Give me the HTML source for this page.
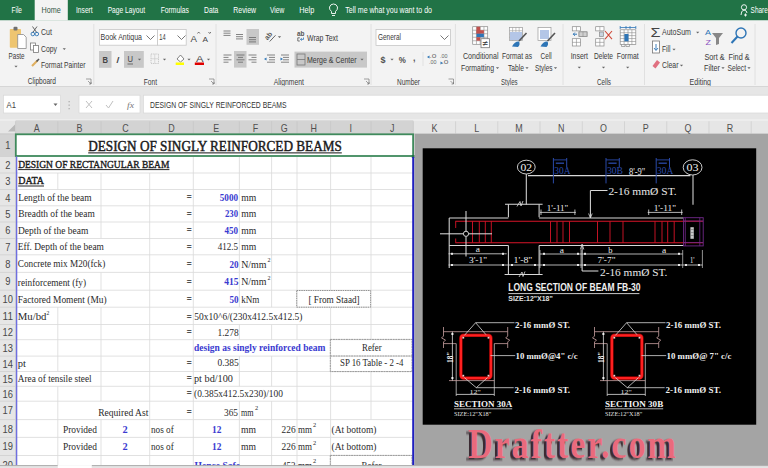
<!DOCTYPE html><html><head><meta charset="utf-8"><style>html,body{margin:0;padding:0;width:768px;height:468px;overflow:hidden;background:#fff}svg{display:block}</style></head><body>
<svg width="768" height="468" viewBox="0 0 768 468">
<rect x="0.00" y="0.00" width="768.00" height="20.50" fill="#217346" />
<rect x="0.00" y="20.50" width="768.00" height="66.00" fill="#f3f3f3" />
<rect x="34.70" y="0.00" width="33.10" height="20.50" fill="#f3f3f3" />
<text x="11.50" y="13.20" font-size="8.8" font-family="'Liberation Sans', sans-serif" font-weight="normal" fill="#ffffff" textLength="10.50" lengthAdjust="spacingAndGlyphs" >File</text>
<text x="76.00" y="13.20" font-size="8.8" font-family="'Liberation Sans', sans-serif" font-weight="normal" fill="#ffffff" textLength="16.70" lengthAdjust="spacingAndGlyphs" >Insert</text>
<text x="107.70" y="13.20" font-size="8.8" font-family="'Liberation Sans', sans-serif" font-weight="normal" fill="#ffffff" textLength="37.30" lengthAdjust="spacingAndGlyphs" >Page Layout</text>
<text x="160.70" y="13.20" font-size="8.8" font-family="'Liberation Sans', sans-serif" font-weight="normal" fill="#ffffff" textLength="28.30" lengthAdjust="spacingAndGlyphs" >Formulas</text>
<text x="204.00" y="13.20" font-size="8.8" font-family="'Liberation Sans', sans-serif" font-weight="normal" fill="#ffffff" textLength="14.30" lengthAdjust="spacingAndGlyphs" >Data</text>
<text x="233.30" y="13.20" font-size="8.8" font-family="'Liberation Sans', sans-serif" font-weight="normal" fill="#ffffff" textLength="22.70" lengthAdjust="spacingAndGlyphs" >Review</text>
<text x="270.00" y="13.20" font-size="8.8" font-family="'Liberation Sans', sans-serif" font-weight="normal" fill="#ffffff" textLength="14.30" lengthAdjust="spacingAndGlyphs" >View</text>
<text x="299.30" y="13.20" font-size="8.8" font-family="'Liberation Sans', sans-serif" font-weight="normal" fill="#ffffff" textLength="15.00" lengthAdjust="spacingAndGlyphs" >Help</text>
<text x="345.30" y="13.20" font-size="8.8" font-family="'Liberation Sans', sans-serif" font-weight="normal" fill="#ffffff" textLength="86.70" lengthAdjust="spacingAndGlyphs" >Tell me what you want to do</text>
<text x="41.50" y="13.20" font-size="8.8" font-family="'Liberation Sans', sans-serif" font-weight="normal" fill="#355846" textLength="19.20" lengthAdjust="spacingAndGlyphs" >Home</text>
<path d="M331.5 13.5 L331.5 11.5 Q329 9.5 329.5 7 Q330.5 4 333.5 4 Q336.5 4 337.5 7 Q338 9.5 335.5 11.5 L335.5 13.5 Z M332 15.5 L335 15.5" stroke="#ffffff" fill="none" stroke-width="0.9" />
<path d="M741 15 Q741 10.5 744 10 Q747 10.5 747 13" stroke="#ffffff" fill="none" stroke-width="0.9" />
<circle cx="744" cy="7.3" r="2.6" fill="none" stroke="#ffffff" stroke-width="0.9"/>
<path d="M745.5 13.5 L745.5 16.5 M744 15 L747 15" stroke="#ffffff" fill="none" stroke-width="0.9" />
<text x="750.60" y="13.20" font-size="8.8" font-family="'Liberation Sans', sans-serif" font-weight="normal" fill="#ffffff" textLength="17.20" lengthAdjust="spacingAndGlyphs" >Share</text>
<rect x="9.80" y="29.00" width="11.20" height="18.70" fill="#eec570"  rx="0.8"/>
<rect x="13.50" y="26.80" width="4.00" height="3.70" fill="#707070"  rx="1"/>
<path d="M17.7 34.5 L23.5 34.5 L26.2 37.2 L26.2 48.5 L17.7 48.5 Z" stroke="#8a8a8a" fill="#ffffff" stroke-width="0.8" />
<text x="8.50" y="59.20" font-size="9.0" font-family="'Liberation Sans', sans-serif" font-weight="normal" fill="#3a3a3a" textLength="16.10" lengthAdjust="spacingAndGlyphs" >Paste</text>
<path d="M14.4 65.7 L17.6 65.7 L16 67.5 Z" stroke="none" fill="#666" stroke-width="1" />
<path d="M32.5 26.5 L37 33 M37 26.5 L32.5 33" stroke="#555" fill="none" stroke-width="0.9" />
<circle cx="32.8" cy="34" r="1.8" fill="none" stroke="#2e75b6" stroke-width="0.9"/><circle cx="36.8" cy="34" r="1.8" fill="none" stroke="#2e75b6" stroke-width="0.9"/>
<text x="41.00" y="34.60" font-size="9.0" font-family="'Liberation Sans', sans-serif" font-weight="normal" fill="#3a3a3a" textLength="11.00" lengthAdjust="spacingAndGlyphs" >Cut</text>
<rect x="30.50" y="43.00" width="5.00" height="7.00" fill="#ffffff" stroke="#7a7a7a" stroke-width="0.8"/>
<rect x="33.50" y="45.50" width="5.00" height="7.00" fill="#ffffff" stroke="#7a7a7a" stroke-width="0.8"/>
<text x="41.00" y="51.50" font-size="9.0" font-family="'Liberation Sans', sans-serif" font-weight="normal" fill="#3a3a3a" textLength="16.00" lengthAdjust="spacingAndGlyphs" >Copy</text>
<path d="M62.699999999999996 48.2 L65.89999999999999 48.2 L64.3 50 Z" stroke="none" fill="#666" stroke-width="1" />
<path d="M32 66 L37.5 60.5" stroke="#e0b060" fill="none" stroke-width="2.2" />
<path d="M36.5 61.5 L39 59" stroke="#555" fill="none" stroke-width="1.6" />
<text x="41.00" y="67.50" font-size="9.0" font-family="'Liberation Sans', sans-serif" font-weight="normal" fill="#3a3a3a" textLength="44.40" lengthAdjust="spacingAndGlyphs" >Format Painter</text>
<text x="27.70" y="83.80" font-size="9.0" font-family="'Liberation Sans', sans-serif" font-weight="normal" fill="#3a3a3a" textLength="28.30" lengthAdjust="spacingAndGlyphs" >Clipboard</text>
<path d="M86.0 79.0 L91.0 79.0 L91.0 84.0 M88.0 81.0 L91.0 84.0 M91.0 82.0 L91.0 84.0 L89.0 84.0" stroke="#7a7a7a" fill="none" stroke-width="0.7" />
<line x1="93.80" y1="24.00" x2="93.80" y2="85.00" stroke="#dadada" stroke-width="0.8" />
<rect x="99.50" y="29.50" width="57.90" height="15.70" fill="#ffffff" stroke="#c6c6c6" stroke-width="0.8"/>
<rect x="157.40" y="29.50" width="28.80" height="15.70" fill="#ffffff" stroke="#c6c6c6" stroke-width="0.8"/>
<text x="100.60" y="40.40" font-size="9.0" font-family="'Liberation Sans', sans-serif" font-weight="normal" fill="#3a3a3a" textLength="41.40" lengthAdjust="spacingAndGlyphs" >Book Antiqua</text>
<path d="M146.5 35.5 L150.5 39.5 L154.5 35.5" stroke="#555" fill="none" stroke-width="0.8" />
<text x="159.30" y="40.40" font-size="9.0" font-family="'Liberation Sans', sans-serif" font-weight="normal" fill="#3a3a3a" textLength="6.30" lengthAdjust="spacingAndGlyphs" >14</text>
<path d="M177.5 35.5 L181.5 39.5 L185.5 35.5" stroke="#555" fill="none" stroke-width="0.8" />
<text x="190.50" y="41.50" font-size="9.5" font-family="'Liberation Sans', sans-serif" font-weight="normal" fill="#444" textLength="6.50" lengthAdjust="spacingAndGlyphs" >A</text>
<path d="M197.5 33.5 L198.7 32 L199.9 33.5" stroke="#444" fill="none" stroke-width="0.7" />
<text x="202.50" y="41.50" font-size="8" font-family="'Liberation Sans', sans-serif" font-weight="normal" fill="#444" textLength="5.50" lengthAdjust="spacingAndGlyphs" >A</text>
<path d="M208.5 32 L209.7 33.5 L210.9 32" stroke="#444" fill="none" stroke-width="0.7" />
<rect x="99.00" y="51.00" width="12.50" height="16.80" fill="#c8c8c8" />
<text x="102.50" y="62.50" font-size="8.5" font-family="'Liberation Sans', sans-serif" font-weight="bold" fill="#444" textLength="5.50" lengthAdjust="spacingAndGlyphs" >B</text>
<text x="116.00" y="62.50" font-size="8.5" font-family="'Liberation Sans', sans-serif" font-weight="normal" fill="#444" textLength="3.50" lengthAdjust="spacingAndGlyphs" font-style="italic">I</text>
<rect x="124.00" y="51.00" width="19.80" height="16.80" fill="#c8c8c8" />
<text x="127.50" y="62.00" font-size="8.5" font-family="'Liberation Sans', sans-serif" font-weight="normal" fill="#444" textLength="5.50" lengthAdjust="spacingAndGlyphs" >U</text>
<line x1="127.50" y1="64.00" x2="133.00" y2="64.00" stroke="#444" stroke-width="0.7" />
<path d="M137.9 58.7 L141.1 58.7 L139.5 60.5 Z" stroke="none" fill="#666" stroke-width="1" />
<rect x="151.00" y="54.00" width="7.50" height="9.50" fill="none" stroke="#b0b0b0" stroke-width="0.7" stroke-dasharray="1 0.8"/>
<line x1="154.75" y1="54.00" x2="154.75" y2="63.50" stroke="#c8c8c8" stroke-width="0.6" />
<line x1="151.00" y1="58.75" x2="158.50" y2="58.75" stroke="#c8c8c8" stroke-width="0.6" />
<path d="M162.9 58.7 L166.1 58.7 L164.5 60.5 Z" stroke="none" fill="#666" stroke-width="1" />
<path d="M177 59 L180.5 55 L184 59 L180.5 62 Z" stroke="#666" fill="#ffffff" stroke-width="0.8" />
<rect x="175.70" y="62.50" width="8.30" height="2.50" fill="#ffff00" />
<path d="M187.4 58.7 L190.6 58.7 L189 60.5 Z" stroke="none" fill="#666" stroke-width="1" />
<text x="196.00" y="61.50" font-size="9" font-family="'Liberation Sans', sans-serif" font-weight="normal" fill="#444" textLength="7.50" lengthAdjust="spacingAndGlyphs" >A</text>
<rect x="194.80" y="62.50" width="9.20" height="2.50" fill="#e00000" />
<path d="M206.9 58.7 L210.1 58.7 L208.5 60.5 Z" stroke="none" fill="#666" stroke-width="1" />
<text x="143.80" y="84.70" font-size="9.0" font-family="'Liberation Sans', sans-serif" font-weight="normal" fill="#3a3a3a" textLength="13.20" lengthAdjust="spacingAndGlyphs" >Font</text>
<path d="M209.0 79.0 L214.0 79.0 L214.0 84.0 M211.0 81.0 L214.0 84.0 M214.0 82.0 L214.0 84.0 L212.0 84.0" stroke="#7a7a7a" fill="none" stroke-width="0.7" />
<line x1="216.00" y1="24.00" x2="216.00" y2="85.00" stroke="#dadada" stroke-width="0.8" />
<line x1="223.50" y1="31.00" x2="230.50" y2="31.00" stroke="#666" stroke-width="0.8" />
<line x1="223.50" y1="33.20" x2="230.50" y2="33.20" stroke="#666" stroke-width="0.8" />
<line x1="223.50" y1="35.40" x2="230.50" y2="35.40" stroke="#666" stroke-width="0.8" />
<line x1="236.00" y1="34.50" x2="243.00" y2="34.50" stroke="#666" stroke-width="0.8" />
<line x1="236.00" y1="36.70" x2="243.00" y2="36.70" stroke="#666" stroke-width="0.8" />
<line x1="236.00" y1="38.90" x2="243.00" y2="38.90" stroke="#666" stroke-width="0.8" />
<rect x="246.50" y="29.00" width="12.50" height="15.80" fill="#c8c8c8" />
<line x1="249.00" y1="37.50" x2="256.00" y2="37.50" stroke="#666" stroke-width="0.8" />
<line x1="249.00" y1="39.70" x2="256.00" y2="39.70" stroke="#666" stroke-width="0.8" />
<line x1="249.00" y1="41.90" x2="256.00" y2="41.90" stroke="#666" stroke-width="0.8" />
<text x="0.00" y="0.00" font-size="7" font-family="'Liberation Sans', sans-serif" font-weight="bold" fill="#555" textLength="8.00" lengthAdjust="spacingAndGlyphs" transform="translate(267.5 40.5) rotate(-50)">ab</text>
<path d="M269.7 41.5 L275.5 35.3" stroke="#555" fill="none" stroke-width="0.9" />
<path d="M277.9 36.2 L281.1 36.2 L279.5 38 Z" stroke="none" fill="#666" stroke-width="1" />
<line x1="223.50" y1="55.00" x2="231.50" y2="55.00" stroke="#666" stroke-width="0.8" />
<line x1="223.50" y1="57.40" x2="228.50" y2="57.40" stroke="#666" stroke-width="0.8" />
<line x1="223.50" y1="59.80" x2="231.50" y2="59.80" stroke="#666" stroke-width="0.8" />
<line x1="223.50" y1="62.20" x2="228.50" y2="62.20" stroke="#666" stroke-width="0.8" />
<rect x="234.00" y="51.00" width="12.50" height="16.60" fill="#c8c8c8" />
<line x1="236.50" y1="55.00" x2="244.50" y2="55.00" stroke="#666" stroke-width="0.8" />
<line x1="238.00" y1="57.40" x2="243.00" y2="57.40" stroke="#666" stroke-width="0.8" />
<line x1="236.50" y1="59.80" x2="244.50" y2="59.80" stroke="#666" stroke-width="0.8" />
<line x1="238.00" y1="62.20" x2="243.00" y2="62.20" stroke="#666" stroke-width="0.8" />
<line x1="248.50" y1="55.00" x2="256.50" y2="55.00" stroke="#666" stroke-width="0.8" />
<line x1="251.50" y1="57.40" x2="256.50" y2="57.40" stroke="#666" stroke-width="0.8" />
<line x1="248.50" y1="59.80" x2="256.50" y2="59.80" stroke="#666" stroke-width="0.8" />
<line x1="251.50" y1="62.20" x2="256.50" y2="62.20" stroke="#666" stroke-width="0.8" />
<line x1="267.00" y1="55.00" x2="275.00" y2="55.00" stroke="#666" stroke-width="0.8" />
<line x1="269.00" y1="57.40" x2="275.00" y2="57.40" stroke="#666" stroke-width="0.8" />
<line x1="269.00" y1="59.80" x2="275.00" y2="59.80" stroke="#666" stroke-width="0.8" />
<line x1="267.00" y1="62.20" x2="275.00" y2="62.20" stroke="#666" stroke-width="0.8" />
<path d="M264 59 L266.5 57.5 L266.5 60.5 Z" stroke="none" fill="#2e75b6" stroke-width="1" />
<line x1="281.00" y1="55.00" x2="289.00" y2="55.00" stroke="#666" stroke-width="0.8" />
<line x1="283.00" y1="57.40" x2="289.00" y2="57.40" stroke="#666" stroke-width="0.8" />
<line x1="283.00" y1="59.80" x2="289.00" y2="59.80" stroke="#666" stroke-width="0.8" />
<line x1="281.00" y1="62.20" x2="289.00" y2="62.20" stroke="#666" stroke-width="0.8" />
<path d="M283 59 L280.5 57.5 L280.5 60.5 Z" stroke="none" fill="#2e75b6" stroke-width="1" />
<text x="297.00" y="36.30" font-size="6.5" font-family="'Liberation Sans', sans-serif" font-weight="bold" fill="#555" textLength="7.50" lengthAdjust="spacingAndGlyphs" >ab</text>
<path d="M299.8 37.8 L297.8 37.8 L297.8 41 L299.8 41" stroke="#666" fill="none" stroke-width="0.9" />
<path d="M300.5 39.4 L303.5 39.4 L303.5 37.5 M301.8 38.2 L300.5 39.4 L301.8 40.6" stroke="#2e75b6" fill="none" stroke-width="0.8" />
<text x="307.00" y="40.50" font-size="9.0" font-family="'Liberation Sans', sans-serif" font-weight="normal" fill="#3a3a3a" textLength="31.00" lengthAdjust="spacingAndGlyphs" >Wrap Text</text>
<rect x="294.50" y="51.60" width="72.50" height="16.00" fill="#c8c8c8" />
<rect x="297.00" y="54.00" width="8.00" height="11.00" fill="none" stroke="#777" stroke-width="0.8"/>
<line x1="297.00" y1="59.50" x2="305.00" y2="59.50" stroke="#777" stroke-width="0.8" />
<text x="307.00" y="62.60" font-size="9.0" font-family="'Liberation Sans', sans-serif" font-weight="normal" fill="#3a3a3a" textLength="49.50" lengthAdjust="spacingAndGlyphs" >Merge &amp; Center</text>
<path d="M360.4 58.7 L363.6 58.7 L362 60.5 Z" stroke="none" fill="#666" stroke-width="1" />
<text x="273.70" y="84.50" font-size="9.0" font-family="'Liberation Sans', sans-serif" font-weight="normal" fill="#3a3a3a" textLength="30.30" lengthAdjust="spacingAndGlyphs" >Alignment</text>
<path d="M364.0 79.0 L369.0 79.0 L369.0 84.0 M366.0 81.0 L369.0 84.0 M369.0 82.0 L369.0 84.0 L367.0 84.0" stroke="#7a7a7a" fill="none" stroke-width="0.7" />
<line x1="371.00" y1="24.00" x2="371.00" y2="85.00" stroke="#dadada" stroke-width="0.8" />
<rect x="376.00" y="29.40" width="74.50" height="16.00" fill="#ffffff" stroke="#c6c6c6" stroke-width="0.8"/>
<text x="378.00" y="40.40" font-size="9.0" font-family="'Liberation Sans', sans-serif" font-weight="normal" fill="#3a3a3a" textLength="23.00" lengthAdjust="spacingAndGlyphs" >General</text>
<path d="M440.5 35.5 L444.5 39.5 L448.5 35.5" stroke="#555" fill="none" stroke-width="0.8" />
<text x="380.50" y="62.50" font-size="9.5" font-family="'Liberation Sans', sans-serif" font-weight="bold" fill="#505050" textLength="5.00" lengthAdjust="spacingAndGlyphs" >$</text>
<path d="M390.4 58.7 L393.6 58.7 L392 60.5 Z" stroke="none" fill="#666" stroke-width="1" />
<text x="398.70" y="62.50" font-size="8.5" font-family="'Liberation Sans', sans-serif" font-weight="bold" fill="#505050" textLength="7.10" lengthAdjust="spacingAndGlyphs" >%</text>
<text x="413.00" y="61.00" font-size="9" font-family="'Liberation Sans', sans-serif" font-weight="bold" fill="#555" textLength="2.50" lengthAdjust="spacingAndGlyphs" >,</text>
<line x1="423.00" y1="52.00" x2="423.00" y2="66.00" stroke="#dadada" stroke-width="0.7" />
<text x="429.50" y="58.00" font-size="5.5" font-family="'Liberation Sans', sans-serif" font-weight="normal" fill="#666" textLength="7.00" lengthAdjust="spacingAndGlyphs" >.0</text>
<text x="429.00" y="64.00" font-size="5.5" font-family="'Liberation Sans', sans-serif" font-weight="normal" fill="#666" textLength="7.50" lengthAdjust="spacingAndGlyphs" >.00</text>
<path d="M427 57 L429.5 55.5 L429.5 58.5 Z" stroke="none" fill="#2e75b6" stroke-width="1" />
<text x="440.00" y="58.00" font-size="5.5" font-family="'Liberation Sans', sans-serif" font-weight="normal" fill="#666" textLength="7.50" lengthAdjust="spacingAndGlyphs" >.00</text>
<text x="441.50" y="64.00" font-size="5.5" font-family="'Liberation Sans', sans-serif" font-weight="normal" fill="#666" textLength="7.00" lengthAdjust="spacingAndGlyphs" >.0</text>
<path d="M443 63 L440.5 61.5 L440.5 64.5 Z" stroke="none" fill="#2e75b6" stroke-width="1" />
<text x="397.00" y="84.50" font-size="9.0" font-family="'Liberation Sans', sans-serif" font-weight="normal" fill="#3a3a3a" textLength="23.00" lengthAdjust="spacingAndGlyphs" >Number</text>
<path d="M448.5 79.0 L453.5 79.0 L453.5 84.0 M450.5 81.0 L453.5 84.0 M453.5 82.0 L453.5 84.0 L451.5 84.0" stroke="#7a7a7a" fill="none" stroke-width="0.7" />
<line x1="455.40" y1="24.00" x2="455.40" y2="85.00" stroke="#dadada" stroke-width="0.8" />
<rect x="472.70" y="26.70" width="15.00" height="17.60" fill="#ffffff" stroke="#8a8a8a" stroke-width="0.7"/>
<line x1="476.45" y1="26.70" x2="476.45" y2="44.30" stroke="#8a8a8a" stroke-width="0.6" />
<line x1="480.20" y1="26.70" x2="480.20" y2="44.30" stroke="#8a8a8a" stroke-width="0.6" />
<line x1="483.95" y1="26.70" x2="483.95" y2="44.30" stroke="#8a8a8a" stroke-width="0.6" />
<line x1="472.70" y1="30.22" x2="487.70" y2="30.22" stroke="#8a8a8a" stroke-width="0.6" />
<line x1="472.70" y1="33.74" x2="487.70" y2="33.74" stroke="#8a8a8a" stroke-width="0.6" />
<line x1="472.70" y1="37.26" x2="487.70" y2="37.26" stroke="#8a8a8a" stroke-width="0.6" />
<line x1="472.70" y1="40.78" x2="487.70" y2="40.78" stroke="#8a8a8a" stroke-width="0.6" />
<rect x="476.50" y="26.70" width="3.70" height="7.00" fill="#c0504d" />
<rect x="476.50" y="30.20" width="7.40" height="3.50" fill="#c0504d" />
<rect x="476.50" y="33.70" width="7.40" height="3.50" fill="#2e75b6" />
<rect x="476.50" y="37.20" width="3.70" height="3.50" fill="#c0504d" />
<rect x="481.00" y="38.70" width="8.40" height="9.00" fill="#ffffff" stroke="#777" stroke-width="0.8"/>
<text x="482.50" y="46.00" font-size="8" font-family="'Liberation Sans', sans-serif" font-weight="normal" fill="#333" textLength="5.50" lengthAdjust="spacingAndGlyphs" >≠</text>
<text x="463.00" y="59.20" font-size="9.0" font-family="'Liberation Sans', sans-serif" font-weight="normal" fill="#3a3a3a" textLength="35.50" lengthAdjust="spacingAndGlyphs" >Conditional</text>
<text x="461.00" y="70.60" font-size="9.0" font-family="'Liberation Sans', sans-serif" font-weight="normal" fill="#3a3a3a" textLength="33.00" lengthAdjust="spacingAndGlyphs" >Formatting</text>
<path d="M495.9 67.2 L499.1 67.2 L497.5 69 Z" stroke="none" fill="#666" stroke-width="1" />
<rect x="509.40" y="27.50" width="13.00" height="13.00" fill="#ffffff" stroke="#9a9a9a" stroke-width="0.7"/>
<line x1="512.65" y1="27.50" x2="512.65" y2="40.50" stroke="#9a9a9a" stroke-width="0.6" />
<line x1="515.90" y1="27.50" x2="515.90" y2="40.50" stroke="#9a9a9a" stroke-width="0.6" />
<line x1="519.15" y1="27.50" x2="519.15" y2="40.50" stroke="#9a9a9a" stroke-width="0.6" />
<line x1="509.40" y1="30.75" x2="522.40" y2="30.75" stroke="#9a9a9a" stroke-width="0.6" />
<line x1="509.40" y1="34.00" x2="522.40" y2="34.00" stroke="#9a9a9a" stroke-width="0.6" />
<line x1="509.40" y1="37.25" x2="522.40" y2="37.25" stroke="#9a9a9a" stroke-width="0.6" />
<rect x="510.00" y="32.00" width="12.00" height="8.00" fill="#b4c6e7" />
<path d="M512 46.5 Q515 41 519 41.5 Q520.5 44.5 518 47 Z" stroke="none" fill="#2e75b6" stroke-width="1" />
<path d="M519 41 L526.5 33" stroke="#555" fill="none" stroke-width="1.6" />
<text x="502.00" y="59.20" font-size="9.0" font-family="'Liberation Sans', sans-serif" font-weight="normal" fill="#3a3a3a" textLength="30.00" lengthAdjust="spacingAndGlyphs" >Format as</text>
<text x="508.00" y="70.60" font-size="9.0" font-family="'Liberation Sans', sans-serif" font-weight="normal" fill="#3a3a3a" textLength="16.00" lengthAdjust="spacingAndGlyphs" >Table</text>
<path d="M525.4 67.2 L528.6 67.2 L527 69 Z" stroke="none" fill="#666" stroke-width="1" />
<rect x="538.00" y="27.50" width="13.00" height="13.00" fill="#ffffff" stroke="#9a9a9a" stroke-width="0.7"/>
<rect x="540.00" y="30.00" width="9.00" height="9.00" fill="#b4c6e7" />
<path d="M540.5 46.5 Q543.5 41 547.5 41.5 Q549 44.5 546.5 47 Z" stroke="none" fill="#2e75b6" stroke-width="1" />
<path d="M547.5 41 L555 33" stroke="#555" fill="none" stroke-width="1.6" />
<text x="540.60" y="59.20" font-size="9.0" font-family="'Liberation Sans', sans-serif" font-weight="normal" fill="#3a3a3a" textLength="11.20" lengthAdjust="spacingAndGlyphs" >Cell</text>
<text x="535.00" y="70.60" font-size="9.0" font-family="'Liberation Sans', sans-serif" font-weight="normal" fill="#3a3a3a" textLength="17.50" lengthAdjust="spacingAndGlyphs" >Styles</text>
<path d="M553.9 67.2 L557.1 67.2 L555.5 69 Z" stroke="none" fill="#666" stroke-width="1" />
<text x="501.00" y="84.70" font-size="9.0" font-family="'Liberation Sans', sans-serif" font-weight="normal" fill="#3a3a3a" textLength="16.60" lengthAdjust="spacingAndGlyphs" >Styles</text>
<line x1="563.00" y1="24.00" x2="563.00" y2="85.00" stroke="#dadada" stroke-width="0.8" />
<rect x="572.30" y="26.70" width="8.30" height="4.20" fill="#ffffff" stroke="#8a8a8a" stroke-width="0.7"/>
<line x1="576.45" y1="26.70" x2="576.45" y2="30.90" stroke="#8a8a8a" stroke-width="0.6" />
<rect x="579.00" y="31.90" width="8.00" height="4.70" fill="#ffffff" stroke="#8a8a8a" stroke-width="0.7"/>
<line x1="583.00" y1="31.90" x2="583.00" y2="36.60" stroke="#8a8a8a" stroke-width="0.6" />
<rect x="579.00" y="31.90" width="8.00" height="4.70" fill="#d0d0d0" stroke="#8a8a8a" stroke-width="0.7"/>
<line x1="583.00" y1="31.90" x2="583.00" y2="36.60" stroke="#8a8a8a" stroke-width="0.6" />
<path d="M573.3 34.2 L577 34.2 M574.8 32.6 L573.3 34.2 L574.8 35.8" stroke="#2e75b6" fill="none" stroke-width="1.0" />
<rect x="572.30" y="38.70" width="8.30" height="7.30" fill="#ffffff" stroke="#8a8a8a" stroke-width="0.7"/>
<line x1="576.45" y1="38.70" x2="576.45" y2="46.00" stroke="#8a8a8a" stroke-width="0.6" />
<line x1="572.30" y1="42.35" x2="580.60" y2="42.35" stroke="#8a8a8a" stroke-width="0.6" />
<rect x="595.70" y="26.70" width="8.30" height="4.20" fill="#ffffff" stroke="#8a8a8a" stroke-width="0.7"/>
<line x1="599.85" y1="26.70" x2="599.85" y2="30.90" stroke="#8a8a8a" stroke-width="0.6" />
<rect x="599.40" y="32.00" width="4.10" height="4.50" fill="#c8d4e0" stroke="#8a8a8a" stroke-width="0.7"/>
<path d="M605 31 L612 39.2 M612 31 L605 39.2" stroke="#d04a3a" fill="none" stroke-width="1.1" />
<rect x="595.70" y="38.70" width="8.30" height="7.30" fill="#ffffff" stroke="#8a8a8a" stroke-width="0.7"/>
<line x1="599.85" y1="38.70" x2="599.85" y2="46.00" stroke="#8a8a8a" stroke-width="0.6" />
<line x1="595.70" y1="42.35" x2="604.00" y2="42.35" stroke="#8a8a8a" stroke-width="0.6" />
<path d="M620.2 27.5 L635.8 27.5 M620.2 26 L620.2 29 M635.8 26 L635.8 29 M626 26 L626 29 M630 26 L630 29" stroke="#2e75b6" fill="none" stroke-width="0.8" />
<rect x="620.20" y="29.80" width="15.60" height="14.60" fill="#ffffff" stroke="#8a8a8a" stroke-width="0.7"/>
<line x1="624.10" y1="29.80" x2="624.10" y2="44.40" stroke="#8a8a8a" stroke-width="0.6" />
<line x1="628.00" y1="29.80" x2="628.00" y2="44.40" stroke="#8a8a8a" stroke-width="0.6" />
<line x1="631.90" y1="29.80" x2="631.90" y2="44.40" stroke="#8a8a8a" stroke-width="0.6" />
<line x1="620.20" y1="32.72" x2="635.80" y2="32.72" stroke="#8a8a8a" stroke-width="0.6" />
<line x1="620.20" y1="35.64" x2="635.80" y2="35.64" stroke="#8a8a8a" stroke-width="0.6" />
<line x1="620.20" y1="38.56" x2="635.80" y2="38.56" stroke="#8a8a8a" stroke-width="0.6" />
<line x1="620.20" y1="41.48" x2="635.80" y2="41.48" stroke="#8a8a8a" stroke-width="0.6" />
<rect x="624.40" y="34.00" width="4.10" height="7.30" fill="#2e75b6" />
<path d="M621.5 44.4 L621.5 46.5 L625 46.5 L625 44.4 M626 44.4 L626 46.5 L629.5 46.5 L629.5 44.4" stroke="#8a8a8a" fill="none" stroke-width="0.7" />
<text x="570.70" y="59.20" font-size="9.0" font-family="'Liberation Sans', sans-serif" font-weight="normal" fill="#3a3a3a" textLength="17.30" lengthAdjust="spacingAndGlyphs" >Insert</text>
<path d="M577.6999999999999 66.7 L580.9 66.7 L579.3 68.5 Z" stroke="none" fill="#666" stroke-width="1" />
<text x="594.00" y="59.20" font-size="9.0" font-family="'Liberation Sans', sans-serif" font-weight="normal" fill="#3a3a3a" textLength="19.00" lengthAdjust="spacingAndGlyphs" >Delete</text>
<path d="M601.9 66.7 L605.1 66.7 L603.5 68.5 Z" stroke="none" fill="#666" stroke-width="1" />
<text x="616.80" y="59.20" font-size="9.0" font-family="'Liberation Sans', sans-serif" font-weight="normal" fill="#3a3a3a" textLength="21.90" lengthAdjust="spacingAndGlyphs" >Format</text>
<path d="M626.1 66.7 L629.3000000000001 66.7 L627.7 68.5 Z" stroke="none" fill="#666" stroke-width="1" />
<text x="597.00" y="84.70" font-size="9.0" font-family="'Liberation Sans', sans-serif" font-weight="normal" fill="#3a3a3a" textLength="14.00" lengthAdjust="spacingAndGlyphs" >Cells</text>
<line x1="644.50" y1="24.00" x2="644.50" y2="85.00" stroke="#dadada" stroke-width="0.8" />
<text x="650.50" y="36.50" font-size="12" font-family="'Liberation Sans', sans-serif" font-weight="normal" fill="#444" textLength="10.00" lengthAdjust="spacingAndGlyphs" >Σ</text>
<text x="662.00" y="35.20" font-size="9.0" font-family="'Liberation Sans', sans-serif" font-weight="normal" fill="#3a3a3a" textLength="29.00" lengthAdjust="spacingAndGlyphs" >AutoSum</text>
<path d="M696.1 31.7 L699.3000000000001 31.7 L697.7 33.5 Z" stroke="none" fill="#666" stroke-width="1" />
<rect x="652.50" y="41.00" width="7.00" height="12.00" fill="#ffffff" stroke="#777" stroke-width="0.8"/>
<path d="M656 44 L656 50 M654 48 L656 50.5 L658 48" stroke="#2e75b6" fill="none" stroke-width="0.9" />
<text x="662.00" y="51.70" font-size="9.0" font-family="'Liberation Sans', sans-serif" font-weight="normal" fill="#3a3a3a" textLength="8.50" lengthAdjust="spacingAndGlyphs" >Fill</text>
<path d="M672.4 48.7 L675.6 48.7 L674 50.5 Z" stroke="none" fill="#666" stroke-width="1" />
<path d="M652.5 66 L657 60 L660 62.5 L655.5 68.5 Z" stroke="none" fill="#e07080" stroke-width="1" />
<text x="662.00" y="68.00" font-size="9.0" font-family="'Liberation Sans', sans-serif" font-weight="normal" fill="#3a3a3a" textLength="16.50" lengthAdjust="spacingAndGlyphs" >Clear</text>
<path d="M679.9 64.7 L683.1 64.7 L681.5 66.5 Z" stroke="none" fill="#666" stroke-width="1" />
<text x="705.00" y="35.00" font-size="7.5" font-family="'Liberation Sans', sans-serif" font-weight="normal" fill="#2e75b6" textLength="6.00" lengthAdjust="spacingAndGlyphs" >A</text>
<text x="705.50" y="45.00" font-size="7.5" font-family="'Liberation Sans', sans-serif" font-weight="normal" fill="#8a50c0" textLength="5.50" lengthAdjust="spacingAndGlyphs" >Z</text>
<path d="M712 33 L723 33 L719 38 L719 44 L716 45 L716 38 Z" stroke="none" fill="#888" stroke-width="1" />
<text x="704.40" y="59.50" font-size="9.0" font-family="'Liberation Sans', sans-serif" font-weight="normal" fill="#3a3a3a" textLength="20.20" lengthAdjust="spacingAndGlyphs" >Sort &amp;</text>
<text x="704.00" y="70.60" font-size="9.0" font-family="'Liberation Sans', sans-serif" font-weight="normal" fill="#3a3a3a" textLength="16.00" lengthAdjust="spacingAndGlyphs" >Filter</text>
<path d="M721.4 67.2 L724.6 67.2 L723 69 Z" stroke="none" fill="#666" stroke-width="1" />
<circle cx="741" cy="33" r="5" fill="none" stroke="#2e75b6" stroke-width="1.4"/>
<path d="M737.5 36.5 L731.5 43" stroke="#2e75b6" fill="none" stroke-width="2" />
<text x="728.50" y="59.50" font-size="9.0" font-family="'Liberation Sans', sans-serif" font-weight="normal" fill="#3a3a3a" textLength="21.10" lengthAdjust="spacingAndGlyphs" >Find &amp;</text>
<text x="727.50" y="70.60" font-size="9.0" font-family="'Liberation Sans', sans-serif" font-weight="normal" fill="#3a3a3a" textLength="18.50" lengthAdjust="spacingAndGlyphs" >Select</text>
<path d="M747.4 67.2 L750.6 67.2 L749 69 Z" stroke="none" fill="#666" stroke-width="1" />
<text x="689.60" y="84.70" font-size="9.0" font-family="'Liberation Sans', sans-serif" font-weight="normal" fill="#3a3a3a" textLength="21.40" lengthAdjust="spacingAndGlyphs" >Editing</text>
<line x1="755.00" y1="24.00" x2="755.00" y2="85.00" stroke="#dadada" stroke-width="0.8" />
<line x1="0.00" y1="86.50" x2="768.00" y2="86.50" stroke="#d6d6d6" stroke-width="1" />
<rect x="0.00" y="87.00" width="768.00" height="32.70" fill="#e6e6e6" />
<rect x="3.50" y="95.20" width="57.00" height="17.80" fill="#ffffff" stroke="#d8d8d8" stroke-width="0.7"/>
<text x="6.60" y="107.80" font-size="8.5" font-family="'Liberation Sans', sans-serif" font-weight="normal" fill="#444" textLength="9.40" lengthAdjust="spacingAndGlyphs" >A1</text>
<path d="M53.5 103.5 L57.5 103.5 L55.5 106 Z" stroke="none" fill="#666" stroke-width="1" />
<rect x="68.50" y="101.00" width="1.30" height="1.30" fill="#b0b0b0" />
<rect x="68.50" y="104.50" width="1.30" height="1.30" fill="#b0b0b0" />
<rect x="68.50" y="108.00" width="1.30" height="1.30" fill="#b0b0b0" />
<rect x="79.00" y="95.20" width="61.00" height="17.80" fill="#ffffff" stroke="#d8d8d8" stroke-width="0.7"/>
<path d="M86 101 L92 108 M92 101 L86 108" stroke="#c0c0c0" fill="none" stroke-width="1" />
<path d="M106 105 L108.5 108 L113 101" stroke="#c0c0c0" fill="none" stroke-width="1" />
<text x="127.00" y="108.00" font-size="8.5" font-family="'Liberation Serif', serif" font-weight="normal" fill="#777" textLength="7.00" lengthAdjust="spacingAndGlyphs" font-style="italic">fx</text>
<rect x="143.40" y="95.20" width="625.60" height="17.80" fill="#ffffff" stroke="#d8d8d8" stroke-width="0.7"/>
<text x="150.00" y="107.80" font-size="8.5" font-family="'Liberation Sans', sans-serif" font-weight="normal" fill="#333" textLength="136.50" lengthAdjust="spacingAndGlyphs" >DESIGN OF SINGLY REINFORCED BEAMS</text>
<rect x="15.60" y="133.80" width="398.40" height="334.20" fill="#ffffff" />
<rect x="0.00" y="120.30" width="768.00" height="13.50" fill="#e6e6e6" />
<rect x="15.60" y="120.30" width="397.70" height="13.50" fill="#d3d3d3" />
<path d="M8 131.5 L15 131.5 L15 124.5 Z" stroke="none" fill="#b9b9b9" stroke-width="1" />
<rect x="0.00" y="133.80" width="15.60" height="334.20" fill="#e6e6e6" />
<rect x="0.00" y="133.80" width="15.60" height="22.70" fill="#d3d3d3" />
<line x1="15.60" y1="121.30" x2="15.60" y2="133.80" stroke="#c6c6c6" stroke-width="0.8" />
<line x1="57.80" y1="121.30" x2="57.80" y2="133.80" stroke="#c6c6c6" stroke-width="0.8" />
<line x1="101.00" y1="121.30" x2="101.00" y2="133.80" stroke="#c6c6c6" stroke-width="0.8" />
<line x1="149.70" y1="121.30" x2="149.70" y2="133.80" stroke="#c6c6c6" stroke-width="0.8" />
<line x1="193.30" y1="121.30" x2="193.30" y2="133.80" stroke="#c6c6c6" stroke-width="0.8" />
<line x1="239.40" y1="121.30" x2="239.40" y2="133.80" stroke="#c6c6c6" stroke-width="0.8" />
<line x1="271.60" y1="121.30" x2="271.60" y2="133.80" stroke="#c6c6c6" stroke-width="0.8" />
<line x1="297.00" y1="121.30" x2="297.00" y2="133.80" stroke="#c6c6c6" stroke-width="0.8" />
<line x1="330.60" y1="121.30" x2="330.60" y2="133.80" stroke="#c6c6c6" stroke-width="0.8" />
<line x1="371.00" y1="121.30" x2="371.00" y2="133.80" stroke="#c6c6c6" stroke-width="0.8" />
<line x1="413.30" y1="121.30" x2="413.30" y2="133.80" stroke="#c6c6c6" stroke-width="0.8" />
<line x1="0.00" y1="133.80" x2="768.00" y2="133.80" stroke="#c6c6c6" stroke-width="0.8" />
<line x1="455.54" y1="121.30" x2="455.54" y2="133.80" stroke="#cfcfcf" stroke-width="0.8" />
<line x1="497.78" y1="121.30" x2="497.78" y2="133.80" stroke="#cfcfcf" stroke-width="0.8" />
<line x1="540.02" y1="121.30" x2="540.02" y2="133.80" stroke="#cfcfcf" stroke-width="0.8" />
<line x1="582.26" y1="121.30" x2="582.26" y2="133.80" stroke="#cfcfcf" stroke-width="0.8" />
<line x1="624.50" y1="121.30" x2="624.50" y2="133.80" stroke="#cfcfcf" stroke-width="0.8" />
<line x1="666.74" y1="121.30" x2="666.74" y2="133.80" stroke="#cfcfcf" stroke-width="0.8" />
<line x1="708.98" y1="121.30" x2="708.98" y2="133.80" stroke="#cfcfcf" stroke-width="0.8" />
<line x1="751.22" y1="121.30" x2="751.22" y2="133.80" stroke="#cfcfcf" stroke-width="0.8" />
<text x="36.70" y="131.80" font-size="10.5" font-family="'Liberation Sans', sans-serif" font-weight="normal" fill="#505050"  text-anchor="middle" transform="translate(36.70 0) scale(0.85 1) translate(-36.70 0)">A</text>
<text x="79.40" y="131.80" font-size="10.5" font-family="'Liberation Sans', sans-serif" font-weight="normal" fill="#505050"  text-anchor="middle" transform="translate(79.40 0) scale(0.85 1) translate(-79.40 0)">B</text>
<text x="125.35" y="131.80" font-size="10.5" font-family="'Liberation Sans', sans-serif" font-weight="normal" fill="#505050"  text-anchor="middle" transform="translate(125.35 0) scale(0.85 1) translate(-125.35 0)">C</text>
<text x="171.50" y="131.80" font-size="10.5" font-family="'Liberation Sans', sans-serif" font-weight="normal" fill="#505050"  text-anchor="middle" transform="translate(171.50 0) scale(0.85 1) translate(-171.50 0)">D</text>
<text x="216.35" y="131.80" font-size="10.5" font-family="'Liberation Sans', sans-serif" font-weight="normal" fill="#505050"  text-anchor="middle" transform="translate(216.35 0) scale(0.85 1) translate(-216.35 0)">E</text>
<text x="255.50" y="131.80" font-size="10.5" font-family="'Liberation Sans', sans-serif" font-weight="normal" fill="#505050"  text-anchor="middle" transform="translate(255.50 0) scale(0.85 1) translate(-255.50 0)">F</text>
<text x="284.30" y="131.80" font-size="10.5" font-family="'Liberation Sans', sans-serif" font-weight="normal" fill="#505050"  text-anchor="middle" transform="translate(284.30 0) scale(0.85 1) translate(-284.30 0)">G</text>
<text x="313.80" y="131.80" font-size="10.5" font-family="'Liberation Sans', sans-serif" font-weight="normal" fill="#505050"  text-anchor="middle" transform="translate(313.80 0) scale(0.85 1) translate(-313.80 0)">H</text>
<text x="350.80" y="131.80" font-size="10.5" font-family="'Liberation Sans', sans-serif" font-weight="normal" fill="#505050"  text-anchor="middle" transform="translate(350.80 0) scale(0.85 1) translate(-350.80 0)">I</text>
<text x="392.15" y="131.80" font-size="10.5" font-family="'Liberation Sans', sans-serif" font-weight="normal" fill="#505050"  text-anchor="middle" transform="translate(392.15 0) scale(0.85 1) translate(-392.15 0)">J</text>
<text x="434.42" y="131.80" font-size="10.5" font-family="'Liberation Sans', sans-serif" font-weight="normal" fill="#505050"  text-anchor="middle" transform="translate(434.42 0) scale(0.85 1) translate(-434.42 0)">K</text>
<text x="476.66" y="131.80" font-size="10.5" font-family="'Liberation Sans', sans-serif" font-weight="normal" fill="#505050"  text-anchor="middle" transform="translate(476.66 0) scale(0.85 1) translate(-476.66 0)">L</text>
<text x="518.90" y="131.80" font-size="10.5" font-family="'Liberation Sans', sans-serif" font-weight="normal" fill="#505050"  text-anchor="middle" transform="translate(518.90 0) scale(0.85 1) translate(-518.90 0)">M</text>
<text x="561.14" y="131.80" font-size="10.5" font-family="'Liberation Sans', sans-serif" font-weight="normal" fill="#505050"  text-anchor="middle" transform="translate(561.14 0) scale(0.85 1) translate(-561.14 0)">N</text>
<text x="603.38" y="131.80" font-size="10.5" font-family="'Liberation Sans', sans-serif" font-weight="normal" fill="#505050"  text-anchor="middle" transform="translate(603.38 0) scale(0.85 1) translate(-603.38 0)">O</text>
<text x="645.62" y="131.80" font-size="10.5" font-family="'Liberation Sans', sans-serif" font-weight="normal" fill="#505050"  text-anchor="middle" transform="translate(645.62 0) scale(0.85 1) translate(-645.62 0)">P</text>
<text x="687.86" y="131.80" font-size="10.5" font-family="'Liberation Sans', sans-serif" font-weight="normal" fill="#505050"  text-anchor="middle" transform="translate(687.86 0) scale(0.85 1) translate(-687.86 0)">Q</text>
<text x="730.10" y="131.80" font-size="10.5" font-family="'Liberation Sans', sans-serif" font-weight="normal" fill="#505050"  text-anchor="middle" transform="translate(730.10 0) scale(0.85 1) translate(-730.10 0)">R</text>
<line x1="0.00" y1="156.50" x2="15.60" y2="156.50" stroke="#cfcfcf" stroke-width="0.8" />
<line x1="0.00" y1="173.00" x2="15.60" y2="173.00" stroke="#cfcfcf" stroke-width="0.8" />
<line x1="0.00" y1="189.50" x2="15.60" y2="189.50" stroke="#cfcfcf" stroke-width="0.8" />
<line x1="0.00" y1="205.80" x2="15.60" y2="205.80" stroke="#cfcfcf" stroke-width="0.8" />
<line x1="0.00" y1="222.00" x2="15.60" y2="222.00" stroke="#cfcfcf" stroke-width="0.8" />
<line x1="0.00" y1="238.50" x2="15.60" y2="238.50" stroke="#cfcfcf" stroke-width="0.8" />
<line x1="0.00" y1="254.80" x2="15.60" y2="254.80" stroke="#cfcfcf" stroke-width="0.8" />
<line x1="0.00" y1="272.40" x2="15.60" y2="272.40" stroke="#cfcfcf" stroke-width="0.8" />
<line x1="0.00" y1="290.20" x2="15.60" y2="290.20" stroke="#cfcfcf" stroke-width="0.8" />
<line x1="0.00" y1="307.20" x2="15.60" y2="307.20" stroke="#cfcfcf" stroke-width="0.8" />
<line x1="0.00" y1="324.50" x2="15.60" y2="324.50" stroke="#cfcfcf" stroke-width="0.8" />
<line x1="0.00" y1="339.70" x2="15.60" y2="339.70" stroke="#cfcfcf" stroke-width="0.8" />
<line x1="0.00" y1="356.10" x2="15.60" y2="356.10" stroke="#cfcfcf" stroke-width="0.8" />
<line x1="0.00" y1="371.50" x2="15.60" y2="371.50" stroke="#cfcfcf" stroke-width="0.8" />
<line x1="0.00" y1="386.30" x2="15.60" y2="386.30" stroke="#cfcfcf" stroke-width="0.8" />
<line x1="0.00" y1="401.20" x2="15.60" y2="401.20" stroke="#cfcfcf" stroke-width="0.8" />
<line x1="0.00" y1="419.60" x2="15.60" y2="419.60" stroke="#cfcfcf" stroke-width="0.8" />
<line x1="0.00" y1="437.40" x2="15.60" y2="437.40" stroke="#cfcfcf" stroke-width="0.8" />
<line x1="0.00" y1="455.50" x2="15.60" y2="455.50" stroke="#cfcfcf" stroke-width="0.8" />
<line x1="0.00" y1="474.00" x2="15.60" y2="474.00" stroke="#cfcfcf" stroke-width="0.8" />
<line x1="15.60" y1="133.80" x2="15.60" y2="468.00" stroke="#c6c6c6" stroke-width="0.8" />
<text x="5.20" y="149.15" font-size="10.5" font-family="'Liberation Sans', sans-serif" font-weight="normal" fill="#484848" textLength="5.20" lengthAdjust="spacingAndGlyphs" >1</text>
<text x="5.20" y="168.75" font-size="10.5" font-family="'Liberation Sans', sans-serif" font-weight="normal" fill="#484848" textLength="5.20" lengthAdjust="spacingAndGlyphs" >2</text>
<text x="5.20" y="185.25" font-size="10.5" font-family="'Liberation Sans', sans-serif" font-weight="normal" fill="#484848" textLength="5.20" lengthAdjust="spacingAndGlyphs" >3</text>
<text x="5.20" y="201.65" font-size="10.5" font-family="'Liberation Sans', sans-serif" font-weight="normal" fill="#484848" textLength="5.20" lengthAdjust="spacingAndGlyphs" >4</text>
<text x="5.20" y="217.90" font-size="10.5" font-family="'Liberation Sans', sans-serif" font-weight="normal" fill="#484848" textLength="5.20" lengthAdjust="spacingAndGlyphs" >5</text>
<text x="5.20" y="234.25" font-size="10.5" font-family="'Liberation Sans', sans-serif" font-weight="normal" fill="#484848" textLength="5.20" lengthAdjust="spacingAndGlyphs" >6</text>
<text x="5.20" y="250.65" font-size="10.5" font-family="'Liberation Sans', sans-serif" font-weight="normal" fill="#484848" textLength="5.20" lengthAdjust="spacingAndGlyphs" >7</text>
<text x="5.20" y="267.60" font-size="10.5" font-family="'Liberation Sans', sans-serif" font-weight="normal" fill="#484848" textLength="5.20" lengthAdjust="spacingAndGlyphs" >8</text>
<text x="5.20" y="285.30" font-size="10.5" font-family="'Liberation Sans', sans-serif" font-weight="normal" fill="#484848" textLength="5.20" lengthAdjust="spacingAndGlyphs" >9</text>
<text x="2.60" y="302.70" font-size="10.5" font-family="'Liberation Sans', sans-serif" font-weight="normal" fill="#484848" textLength="10.40" lengthAdjust="spacingAndGlyphs" >10</text>
<text x="2.60" y="319.85" font-size="10.5" font-family="'Liberation Sans', sans-serif" font-weight="normal" fill="#484848" textLength="10.40" lengthAdjust="spacingAndGlyphs" >11</text>
<text x="2.60" y="336.10" font-size="10.5" font-family="'Liberation Sans', sans-serif" font-weight="normal" fill="#484848" textLength="10.40" lengthAdjust="spacingAndGlyphs" >12</text>
<text x="2.60" y="351.90" font-size="10.5" font-family="'Liberation Sans', sans-serif" font-weight="normal" fill="#484848" textLength="10.40" lengthAdjust="spacingAndGlyphs" >13</text>
<text x="2.60" y="367.80" font-size="10.5" font-family="'Liberation Sans', sans-serif" font-weight="normal" fill="#484848" textLength="10.40" lengthAdjust="spacingAndGlyphs" >14</text>
<text x="2.60" y="382.90" font-size="10.5" font-family="'Liberation Sans', sans-serif" font-weight="normal" fill="#484848" textLength="10.40" lengthAdjust="spacingAndGlyphs" >15</text>
<text x="2.60" y="397.75" font-size="10.5" font-family="'Liberation Sans', sans-serif" font-weight="normal" fill="#484848" textLength="10.40" lengthAdjust="spacingAndGlyphs" >16</text>
<text x="2.60" y="414.40" font-size="10.5" font-family="'Liberation Sans', sans-serif" font-weight="normal" fill="#484848" textLength="10.40" lengthAdjust="spacingAndGlyphs" >17</text>
<text x="2.60" y="432.50" font-size="10.5" font-family="'Liberation Sans', sans-serif" font-weight="normal" fill="#484848" textLength="10.40" lengthAdjust="spacingAndGlyphs" >18</text>
<text x="2.60" y="450.45" font-size="10.5" font-family="'Liberation Sans', sans-serif" font-weight="normal" fill="#484848" textLength="10.40" lengthAdjust="spacingAndGlyphs" >19</text>
<text x="2.60" y="468.50" font-size="10.5" font-family="'Liberation Sans', sans-serif" font-weight="normal" fill="#484848" textLength="10.40" lengthAdjust="spacingAndGlyphs" >20</text>
<line x1="193.30" y1="156.50" x2="193.30" y2="173.00" stroke="#d9d9d9" stroke-width="0.8" />
<line x1="239.40" y1="156.50" x2="239.40" y2="173.00" stroke="#d9d9d9" stroke-width="0.8" />
<line x1="271.60" y1="156.50" x2="271.60" y2="173.00" stroke="#d9d9d9" stroke-width="0.8" />
<line x1="297.00" y1="156.50" x2="297.00" y2="173.00" stroke="#d9d9d9" stroke-width="0.8" />
<line x1="330.60" y1="156.50" x2="330.60" y2="173.00" stroke="#d9d9d9" stroke-width="0.8" />
<line x1="371.00" y1="156.50" x2="371.00" y2="173.00" stroke="#d9d9d9" stroke-width="0.8" />
<line x1="57.80" y1="173.00" x2="57.80" y2="189.50" stroke="#d9d9d9" stroke-width="0.8" />
<line x1="101.00" y1="173.00" x2="101.00" y2="189.50" stroke="#d9d9d9" stroke-width="0.8" />
<line x1="149.70" y1="173.00" x2="149.70" y2="189.50" stroke="#d9d9d9" stroke-width="0.8" />
<line x1="193.30" y1="173.00" x2="193.30" y2="189.50" stroke="#d9d9d9" stroke-width="0.8" />
<line x1="239.40" y1="173.00" x2="239.40" y2="189.50" stroke="#d9d9d9" stroke-width="0.8" />
<line x1="271.60" y1="173.00" x2="271.60" y2="189.50" stroke="#d9d9d9" stroke-width="0.8" />
<line x1="297.00" y1="173.00" x2="297.00" y2="189.50" stroke="#d9d9d9" stroke-width="0.8" />
<line x1="330.60" y1="173.00" x2="330.60" y2="189.50" stroke="#d9d9d9" stroke-width="0.8" />
<line x1="371.00" y1="173.00" x2="371.00" y2="189.50" stroke="#d9d9d9" stroke-width="0.8" />
<line x1="101.00" y1="189.50" x2="101.00" y2="205.80" stroke="#d9d9d9" stroke-width="0.8" />
<line x1="149.70" y1="189.50" x2="149.70" y2="205.80" stroke="#d9d9d9" stroke-width="0.8" />
<line x1="193.30" y1="189.50" x2="193.30" y2="205.80" stroke="#d9d9d9" stroke-width="0.8" />
<line x1="239.40" y1="189.50" x2="239.40" y2="205.80" stroke="#d9d9d9" stroke-width="0.8" />
<line x1="271.60" y1="189.50" x2="271.60" y2="205.80" stroke="#d9d9d9" stroke-width="0.8" />
<line x1="297.00" y1="189.50" x2="297.00" y2="205.80" stroke="#d9d9d9" stroke-width="0.8" />
<line x1="330.60" y1="189.50" x2="330.60" y2="205.80" stroke="#d9d9d9" stroke-width="0.8" />
<line x1="371.00" y1="189.50" x2="371.00" y2="205.80" stroke="#d9d9d9" stroke-width="0.8" />
<line x1="101.00" y1="205.80" x2="101.00" y2="222.00" stroke="#d9d9d9" stroke-width="0.8" />
<line x1="149.70" y1="205.80" x2="149.70" y2="222.00" stroke="#d9d9d9" stroke-width="0.8" />
<line x1="193.30" y1="205.80" x2="193.30" y2="222.00" stroke="#d9d9d9" stroke-width="0.8" />
<line x1="239.40" y1="205.80" x2="239.40" y2="222.00" stroke="#d9d9d9" stroke-width="0.8" />
<line x1="271.60" y1="205.80" x2="271.60" y2="222.00" stroke="#d9d9d9" stroke-width="0.8" />
<line x1="297.00" y1="205.80" x2="297.00" y2="222.00" stroke="#d9d9d9" stroke-width="0.8" />
<line x1="330.60" y1="205.80" x2="330.60" y2="222.00" stroke="#d9d9d9" stroke-width="0.8" />
<line x1="371.00" y1="205.80" x2="371.00" y2="222.00" stroke="#d9d9d9" stroke-width="0.8" />
<line x1="101.00" y1="222.00" x2="101.00" y2="238.50" stroke="#d9d9d9" stroke-width="0.8" />
<line x1="149.70" y1="222.00" x2="149.70" y2="238.50" stroke="#d9d9d9" stroke-width="0.8" />
<line x1="193.30" y1="222.00" x2="193.30" y2="238.50" stroke="#d9d9d9" stroke-width="0.8" />
<line x1="239.40" y1="222.00" x2="239.40" y2="238.50" stroke="#d9d9d9" stroke-width="0.8" />
<line x1="271.60" y1="222.00" x2="271.60" y2="238.50" stroke="#d9d9d9" stroke-width="0.8" />
<line x1="297.00" y1="222.00" x2="297.00" y2="238.50" stroke="#d9d9d9" stroke-width="0.8" />
<line x1="330.60" y1="222.00" x2="330.60" y2="238.50" stroke="#d9d9d9" stroke-width="0.8" />
<line x1="371.00" y1="222.00" x2="371.00" y2="238.50" stroke="#d9d9d9" stroke-width="0.8" />
<line x1="149.70" y1="238.50" x2="149.70" y2="254.80" stroke="#d9d9d9" stroke-width="0.8" />
<line x1="193.30" y1="238.50" x2="193.30" y2="254.80" stroke="#d9d9d9" stroke-width="0.8" />
<line x1="239.40" y1="238.50" x2="239.40" y2="254.80" stroke="#d9d9d9" stroke-width="0.8" />
<line x1="271.60" y1="238.50" x2="271.60" y2="254.80" stroke="#d9d9d9" stroke-width="0.8" />
<line x1="297.00" y1="238.50" x2="297.00" y2="254.80" stroke="#d9d9d9" stroke-width="0.8" />
<line x1="330.60" y1="238.50" x2="330.60" y2="254.80" stroke="#d9d9d9" stroke-width="0.8" />
<line x1="371.00" y1="238.50" x2="371.00" y2="254.80" stroke="#d9d9d9" stroke-width="0.8" />
<line x1="149.70" y1="254.80" x2="149.70" y2="272.40" stroke="#d9d9d9" stroke-width="0.8" />
<line x1="193.30" y1="254.80" x2="193.30" y2="272.40" stroke="#d9d9d9" stroke-width="0.8" />
<line x1="239.40" y1="254.80" x2="239.40" y2="272.40" stroke="#d9d9d9" stroke-width="0.8" />
<line x1="271.60" y1="254.80" x2="271.60" y2="272.40" stroke="#d9d9d9" stroke-width="0.8" />
<line x1="297.00" y1="254.80" x2="297.00" y2="272.40" stroke="#d9d9d9" stroke-width="0.8" />
<line x1="330.60" y1="254.80" x2="330.60" y2="272.40" stroke="#d9d9d9" stroke-width="0.8" />
<line x1="371.00" y1="254.80" x2="371.00" y2="272.40" stroke="#d9d9d9" stroke-width="0.8" />
<line x1="101.00" y1="272.40" x2="101.00" y2="290.20" stroke="#d9d9d9" stroke-width="0.8" />
<line x1="149.70" y1="272.40" x2="149.70" y2="290.20" stroke="#d9d9d9" stroke-width="0.8" />
<line x1="193.30" y1="272.40" x2="193.30" y2="290.20" stroke="#d9d9d9" stroke-width="0.8" />
<line x1="239.40" y1="272.40" x2="239.40" y2="290.20" stroke="#d9d9d9" stroke-width="0.8" />
<line x1="271.60" y1="272.40" x2="271.60" y2="290.20" stroke="#d9d9d9" stroke-width="0.8" />
<line x1="297.00" y1="272.40" x2="297.00" y2="290.20" stroke="#d9d9d9" stroke-width="0.8" />
<line x1="330.60" y1="272.40" x2="330.60" y2="290.20" stroke="#d9d9d9" stroke-width="0.8" />
<line x1="371.00" y1="272.40" x2="371.00" y2="290.20" stroke="#d9d9d9" stroke-width="0.8" />
<line x1="149.70" y1="290.20" x2="149.70" y2="307.20" stroke="#d9d9d9" stroke-width="0.8" />
<line x1="193.30" y1="290.20" x2="193.30" y2="307.20" stroke="#d9d9d9" stroke-width="0.8" />
<line x1="239.40" y1="290.20" x2="239.40" y2="307.20" stroke="#d9d9d9" stroke-width="0.8" />
<line x1="271.60" y1="290.20" x2="271.60" y2="307.20" stroke="#d9d9d9" stroke-width="0.8" />
<line x1="297.00" y1="290.20" x2="297.00" y2="307.20" stroke="#d9d9d9" stroke-width="0.8" />
<line x1="371.00" y1="290.20" x2="371.00" y2="307.20" stroke="#d9d9d9" stroke-width="0.8" />
<line x1="57.80" y1="307.20" x2="57.80" y2="324.50" stroke="#d9d9d9" stroke-width="0.8" />
<line x1="101.00" y1="307.20" x2="101.00" y2="324.50" stroke="#d9d9d9" stroke-width="0.8" />
<line x1="149.70" y1="307.20" x2="149.70" y2="324.50" stroke="#d9d9d9" stroke-width="0.8" />
<line x1="193.30" y1="307.20" x2="193.30" y2="324.50" stroke="#d9d9d9" stroke-width="0.8" />
<line x1="330.60" y1="307.20" x2="330.60" y2="324.50" stroke="#d9d9d9" stroke-width="0.8" />
<line x1="371.00" y1="307.20" x2="371.00" y2="324.50" stroke="#d9d9d9" stroke-width="0.8" />
<line x1="57.80" y1="324.50" x2="57.80" y2="339.70" stroke="#d9d9d9" stroke-width="0.8" />
<line x1="101.00" y1="324.50" x2="101.00" y2="339.70" stroke="#d9d9d9" stroke-width="0.8" />
<line x1="149.70" y1="324.50" x2="149.70" y2="339.70" stroke="#d9d9d9" stroke-width="0.8" />
<line x1="193.30" y1="324.50" x2="193.30" y2="339.70" stroke="#d9d9d9" stroke-width="0.8" />
<line x1="239.40" y1="324.50" x2="239.40" y2="339.70" stroke="#d9d9d9" stroke-width="0.8" />
<line x1="271.60" y1="324.50" x2="271.60" y2="339.70" stroke="#d9d9d9" stroke-width="0.8" />
<line x1="297.00" y1="324.50" x2="297.00" y2="339.70" stroke="#d9d9d9" stroke-width="0.8" />
<line x1="330.60" y1="324.50" x2="330.60" y2="339.70" stroke="#d9d9d9" stroke-width="0.8" />
<line x1="371.00" y1="324.50" x2="371.00" y2="339.70" stroke="#d9d9d9" stroke-width="0.8" />
<line x1="57.80" y1="339.70" x2="57.80" y2="356.10" stroke="#d9d9d9" stroke-width="0.8" />
<line x1="101.00" y1="339.70" x2="101.00" y2="356.10" stroke="#d9d9d9" stroke-width="0.8" />
<line x1="149.70" y1="339.70" x2="149.70" y2="356.10" stroke="#d9d9d9" stroke-width="0.8" />
<line x1="193.30" y1="339.70" x2="193.30" y2="356.10" stroke="#d9d9d9" stroke-width="0.8" />
<line x1="330.60" y1="339.70" x2="330.60" y2="356.10" stroke="#d9d9d9" stroke-width="0.8" />
<line x1="57.80" y1="356.10" x2="57.80" y2="371.50" stroke="#d9d9d9" stroke-width="0.8" />
<line x1="101.00" y1="356.10" x2="101.00" y2="371.50" stroke="#d9d9d9" stroke-width="0.8" />
<line x1="149.70" y1="356.10" x2="149.70" y2="371.50" stroke="#d9d9d9" stroke-width="0.8" />
<line x1="193.30" y1="356.10" x2="193.30" y2="371.50" stroke="#d9d9d9" stroke-width="0.8" />
<line x1="239.40" y1="356.10" x2="239.40" y2="371.50" stroke="#d9d9d9" stroke-width="0.8" />
<line x1="271.60" y1="356.10" x2="271.60" y2="371.50" stroke="#d9d9d9" stroke-width="0.8" />
<line x1="297.00" y1="356.10" x2="297.00" y2="371.50" stroke="#d9d9d9" stroke-width="0.8" />
<line x1="330.60" y1="356.10" x2="330.60" y2="371.50" stroke="#d9d9d9" stroke-width="0.8" />
<line x1="101.00" y1="371.50" x2="101.00" y2="386.30" stroke="#d9d9d9" stroke-width="0.8" />
<line x1="149.70" y1="371.50" x2="149.70" y2="386.30" stroke="#d9d9d9" stroke-width="0.8" />
<line x1="193.30" y1="371.50" x2="193.30" y2="386.30" stroke="#d9d9d9" stroke-width="0.8" />
<line x1="239.40" y1="371.50" x2="239.40" y2="386.30" stroke="#d9d9d9" stroke-width="0.8" />
<line x1="271.60" y1="371.50" x2="271.60" y2="386.30" stroke="#d9d9d9" stroke-width="0.8" />
<line x1="297.00" y1="371.50" x2="297.00" y2="386.30" stroke="#d9d9d9" stroke-width="0.8" />
<line x1="330.60" y1="371.50" x2="330.60" y2="386.30" stroke="#d9d9d9" stroke-width="0.8" />
<line x1="371.00" y1="371.50" x2="371.00" y2="386.30" stroke="#d9d9d9" stroke-width="0.8" />
<line x1="57.80" y1="386.30" x2="57.80" y2="401.20" stroke="#d9d9d9" stroke-width="0.8" />
<line x1="101.00" y1="386.30" x2="101.00" y2="401.20" stroke="#d9d9d9" stroke-width="0.8" />
<line x1="149.70" y1="386.30" x2="149.70" y2="401.20" stroke="#d9d9d9" stroke-width="0.8" />
<line x1="193.30" y1="386.30" x2="193.30" y2="401.20" stroke="#d9d9d9" stroke-width="0.8" />
<line x1="297.00" y1="386.30" x2="297.00" y2="401.20" stroke="#d9d9d9" stroke-width="0.8" />
<line x1="330.60" y1="386.30" x2="330.60" y2="401.20" stroke="#d9d9d9" stroke-width="0.8" />
<line x1="371.00" y1="386.30" x2="371.00" y2="401.20" stroke="#d9d9d9" stroke-width="0.8" />
<line x1="57.80" y1="401.20" x2="57.80" y2="419.60" stroke="#d9d9d9" stroke-width="0.8" />
<line x1="149.70" y1="401.20" x2="149.70" y2="419.60" stroke="#d9d9d9" stroke-width="0.8" />
<line x1="193.30" y1="401.20" x2="193.30" y2="419.60" stroke="#d9d9d9" stroke-width="0.8" />
<line x1="239.40" y1="401.20" x2="239.40" y2="419.60" stroke="#d9d9d9" stroke-width="0.8" />
<line x1="271.60" y1="401.20" x2="271.60" y2="419.60" stroke="#d9d9d9" stroke-width="0.8" />
<line x1="297.00" y1="401.20" x2="297.00" y2="419.60" stroke="#d9d9d9" stroke-width="0.8" />
<line x1="330.60" y1="401.20" x2="330.60" y2="419.60" stroke="#d9d9d9" stroke-width="0.8" />
<line x1="371.00" y1="401.20" x2="371.00" y2="419.60" stroke="#d9d9d9" stroke-width="0.8" />
<line x1="57.80" y1="419.60" x2="57.80" y2="437.40" stroke="#d9d9d9" stroke-width="0.8" />
<line x1="101.00" y1="419.60" x2="101.00" y2="437.40" stroke="#d9d9d9" stroke-width="0.8" />
<line x1="149.70" y1="419.60" x2="149.70" y2="437.40" stroke="#d9d9d9" stroke-width="0.8" />
<line x1="193.30" y1="419.60" x2="193.30" y2="437.40" stroke="#d9d9d9" stroke-width="0.8" />
<line x1="239.40" y1="419.60" x2="239.40" y2="437.40" stroke="#d9d9d9" stroke-width="0.8" />
<line x1="271.60" y1="419.60" x2="271.60" y2="437.40" stroke="#d9d9d9" stroke-width="0.8" />
<line x1="297.00" y1="419.60" x2="297.00" y2="437.40" stroke="#d9d9d9" stroke-width="0.8" />
<line x1="330.60" y1="419.60" x2="330.60" y2="437.40" stroke="#d9d9d9" stroke-width="0.8" />
<line x1="57.80" y1="437.40" x2="57.80" y2="455.50" stroke="#d9d9d9" stroke-width="0.8" />
<line x1="101.00" y1="437.40" x2="101.00" y2="455.50" stroke="#d9d9d9" stroke-width="0.8" />
<line x1="149.70" y1="437.40" x2="149.70" y2="455.50" stroke="#d9d9d9" stroke-width="0.8" />
<line x1="193.30" y1="437.40" x2="193.30" y2="455.50" stroke="#d9d9d9" stroke-width="0.8" />
<line x1="239.40" y1="437.40" x2="239.40" y2="455.50" stroke="#d9d9d9" stroke-width="0.8" />
<line x1="271.60" y1="437.40" x2="271.60" y2="455.50" stroke="#d9d9d9" stroke-width="0.8" />
<line x1="297.00" y1="437.40" x2="297.00" y2="455.50" stroke="#d9d9d9" stroke-width="0.8" />
<line x1="330.60" y1="437.40" x2="330.60" y2="455.50" stroke="#d9d9d9" stroke-width="0.8" />
<line x1="57.80" y1="455.50" x2="57.80" y2="465.30" stroke="#d9d9d9" stroke-width="0.8" />
<line x1="101.00" y1="455.50" x2="101.00" y2="465.30" stroke="#d9d9d9" stroke-width="0.8" />
<line x1="149.70" y1="455.50" x2="149.70" y2="465.30" stroke="#d9d9d9" stroke-width="0.8" />
<line x1="193.30" y1="455.50" x2="193.30" y2="465.30" stroke="#d9d9d9" stroke-width="0.8" />
<line x1="239.40" y1="455.50" x2="239.40" y2="465.30" stroke="#d9d9d9" stroke-width="0.8" />
<line x1="271.60" y1="455.50" x2="271.60" y2="465.30" stroke="#d9d9d9" stroke-width="0.8" />
<line x1="297.00" y1="455.50" x2="297.00" y2="465.30" stroke="#d9d9d9" stroke-width="0.8" />
<line x1="330.60" y1="455.50" x2="330.60" y2="465.30" stroke="#d9d9d9" stroke-width="0.8" />
<line x1="15.60" y1="173.00" x2="413.30" y2="173.00" stroke="#d9d9d9" stroke-width="0.8" />
<line x1="15.60" y1="189.50" x2="413.30" y2="189.50" stroke="#d9d9d9" stroke-width="0.8" />
<line x1="15.60" y1="205.80" x2="413.30" y2="205.80" stroke="#d9d9d9" stroke-width="0.8" />
<line x1="15.60" y1="222.00" x2="413.30" y2="222.00" stroke="#d9d9d9" stroke-width="0.8" />
<line x1="15.60" y1="238.50" x2="413.30" y2="238.50" stroke="#d9d9d9" stroke-width="0.8" />
<line x1="15.60" y1="254.80" x2="413.30" y2="254.80" stroke="#d9d9d9" stroke-width="0.8" />
<line x1="15.60" y1="272.40" x2="413.30" y2="272.40" stroke="#d9d9d9" stroke-width="0.8" />
<line x1="15.60" y1="290.20" x2="413.30" y2="290.20" stroke="#d9d9d9" stroke-width="0.8" />
<line x1="15.60" y1="307.20" x2="413.30" y2="307.20" stroke="#d9d9d9" stroke-width="0.8" />
<line x1="15.60" y1="324.50" x2="413.30" y2="324.50" stroke="#d9d9d9" stroke-width="0.8" />
<line x1="15.60" y1="339.70" x2="413.30" y2="339.70" stroke="#d9d9d9" stroke-width="0.8" />
<line x1="15.60" y1="356.10" x2="413.30" y2="356.10" stroke="#d9d9d9" stroke-width="0.8" />
<line x1="15.60" y1="371.50" x2="413.30" y2="371.50" stroke="#d9d9d9" stroke-width="0.8" />
<line x1="15.60" y1="386.30" x2="413.30" y2="386.30" stroke="#d9d9d9" stroke-width="0.8" />
<line x1="15.60" y1="401.20" x2="413.30" y2="401.20" stroke="#d9d9d9" stroke-width="0.8" />
<line x1="15.60" y1="419.60" x2="413.30" y2="419.60" stroke="#d9d9d9" stroke-width="0.8" />
<line x1="15.60" y1="437.40" x2="413.30" y2="437.40" stroke="#d9d9d9" stroke-width="0.8" />
<line x1="15.60" y1="455.50" x2="413.30" y2="455.50" stroke="#d9d9d9" stroke-width="0.8" />
<text x="88.20" y="150.80" font-size="15" font-family="'Liberation Serif', serif" font-weight="normal" fill="#1a1a1a" textLength="253.60" lengthAdjust="spacingAndGlyphs" stroke="#1a1a1a" stroke-width="0.45">DESIGN OF SINGLY REINFORCED BEAMS</text>
<line x1="88.20" y1="152.90" x2="341.80" y2="152.90" stroke="#111" stroke-width="1" />
<text x="18.20" y="167.90" font-size="11.2" font-family="'Liberation Serif', serif" font-weight="normal" fill="#1a1a1a" textLength="151.20" lengthAdjust="spacingAndGlyphs" stroke="#1a1a1a" stroke-width="0.4">DESIGN OF RECTANGULAR BEAM</text>
<line x1="18.20" y1="169.60" x2="169.40" y2="169.60" stroke="#111" stroke-width="0.9" />
<text x="18.20" y="184.30" font-size="11.2" font-family="'Liberation Serif', serif" font-weight="normal" fill="#1a1a1a" textLength="25.80" lengthAdjust="spacingAndGlyphs" stroke="#1a1a1a" stroke-width="0.4">DATA</text>
<line x1="18.20" y1="186.00" x2="44.00" y2="186.00" stroke="#111" stroke-width="0.9" />
<text x="18.20" y="200.70" font-size="11.4" font-family="'Liberation Serif', serif" font-weight="normal" fill="#2a2a2a" textLength="73.40" lengthAdjust="spacingAndGlyphs" >Length of the beam</text>
<text x="18.20" y="217.10" font-size="11.4" font-family="'Liberation Serif', serif" font-weight="normal" fill="#2a2a2a" textLength="76.60" lengthAdjust="spacingAndGlyphs" >Breadth of the beam</text>
<text x="18.00" y="233.60" font-size="11.4" font-family="'Liberation Serif', serif" font-weight="normal" fill="#2a2a2a" textLength="70.30" lengthAdjust="spacingAndGlyphs" >Depth of the beam</text>
<text x="17.80" y="250.00" font-size="11.4" font-family="'Liberation Serif', serif" font-weight="normal" fill="#2a2a2a" textLength="86.10" lengthAdjust="spacingAndGlyphs" >Eff. Depth of the beam</text>
<text x="17.80" y="267.30" font-size="11.4" font-family="'Liberation Serif', serif" font-weight="normal" fill="#2a2a2a" textLength="87.50" lengthAdjust="spacingAndGlyphs" >Concrete mix M20(fck)</text>
<text x="17.80" y="285.60" font-size="11.4" font-family="'Liberation Serif', serif" font-weight="normal" fill="#2a2a2a" textLength="68.30" lengthAdjust="spacingAndGlyphs" >reinforcement (fy)</text>
<text x="17.80" y="302.80" font-size="11.4" font-family="'Liberation Serif', serif" font-weight="normal" fill="#2a2a2a" textLength="88.80" lengthAdjust="spacingAndGlyphs" >Factored Moment (Mu)</text>
<text x="17.80" y="320.30" font-size="11.4" font-family="'Liberation Serif', serif" font-weight="normal" fill="#2a2a2a" textLength="28.70" lengthAdjust="spacingAndGlyphs" >Mu/bd</text>
<text x="46.60" y="315.00" font-size="6.2" font-family="'Liberation Serif', serif" font-weight="normal" fill="#2a2a2a" textLength="2.80" lengthAdjust="spacingAndGlyphs" >2</text>
<text x="17.80" y="367.30" font-size="11.4" font-family="'Liberation Serif', serif" font-weight="normal" fill="#2a2a2a" textLength="8.20" lengthAdjust="spacingAndGlyphs" >pt</text>
<text x="17.80" y="382.40" font-size="11.4" font-family="'Liberation Serif', serif" font-weight="normal" fill="#2a2a2a" textLength="73.80" lengthAdjust="spacingAndGlyphs" >Area of tensile steel</text>
<text x="186.40" y="200.20" font-size="10.5" font-family="'Liberation Serif', serif" font-weight="bold" fill="#2a2a2a" textLength="5.40" lengthAdjust="spacingAndGlyphs" >=</text>
<text x="186.40" y="216.60" font-size="10.5" font-family="'Liberation Serif', serif" font-weight="bold" fill="#2a2a2a" textLength="5.40" lengthAdjust="spacingAndGlyphs" >=</text>
<text x="186.40" y="233.10" font-size="10.5" font-family="'Liberation Serif', serif" font-weight="bold" fill="#2a2a2a" textLength="5.40" lengthAdjust="spacingAndGlyphs" >=</text>
<text x="186.40" y="249.50" font-size="10.5" font-family="'Liberation Serif', serif" font-weight="bold" fill="#2a2a2a" textLength="5.40" lengthAdjust="spacingAndGlyphs" >=</text>
<text x="186.40" y="266.80" font-size="10.5" font-family="'Liberation Serif', serif" font-weight="bold" fill="#2a2a2a" textLength="5.40" lengthAdjust="spacingAndGlyphs" >=</text>
<text x="186.40" y="285.10" font-size="10.5" font-family="'Liberation Serif', serif" font-weight="bold" fill="#2a2a2a" textLength="5.40" lengthAdjust="spacingAndGlyphs" >=</text>
<text x="186.40" y="302.30" font-size="10.5" font-family="'Liberation Serif', serif" font-weight="bold" fill="#2a2a2a" textLength="5.40" lengthAdjust="spacingAndGlyphs" >=</text>
<text x="186.40" y="319.80" font-size="10.5" font-family="'Liberation Serif', serif" font-weight="bold" fill="#2a2a2a" textLength="5.40" lengthAdjust="spacingAndGlyphs" >=</text>
<text x="186.40" y="335.10" font-size="10.5" font-family="'Liberation Serif', serif" font-weight="bold" fill="#2a2a2a" textLength="5.40" lengthAdjust="spacingAndGlyphs" >=</text>
<text x="186.40" y="365.90" font-size="10.5" font-family="'Liberation Serif', serif" font-weight="bold" fill="#2a2a2a" textLength="5.40" lengthAdjust="spacingAndGlyphs" >=</text>
<text x="186.40" y="381.10" font-size="10.5" font-family="'Liberation Serif', serif" font-weight="bold" fill="#2a2a2a" textLength="5.40" lengthAdjust="spacingAndGlyphs" >=</text>
<text x="186.40" y="396.10" font-size="10.5" font-family="'Liberation Serif', serif" font-weight="bold" fill="#2a2a2a" textLength="5.40" lengthAdjust="spacingAndGlyphs" >=</text>
<text x="186.40" y="415.30" font-size="10.5" font-family="'Liberation Serif', serif" font-weight="bold" fill="#2a2a2a" textLength="5.40" lengthAdjust="spacingAndGlyphs" >=</text>
<text x="219.80" y="200.90" font-size="11.4" font-family="'Liberation Serif', serif" font-weight="bold" fill="#3a3ad0" textLength="18.30" lengthAdjust="spacingAndGlyphs" >5000</text>
<text x="225.00" y="217.30" font-size="11.4" font-family="'Liberation Serif', serif" font-weight="bold" fill="#3a3ad0" textLength="13.10" lengthAdjust="spacingAndGlyphs" >230</text>
<text x="224.50" y="233.50" font-size="11.4" font-family="'Liberation Serif', serif" font-weight="bold" fill="#3a3ad0" textLength="13.60" lengthAdjust="spacingAndGlyphs" >450</text>
<text x="217.80" y="250.20" font-size="11.4" font-family="'Liberation Serif', serif" font-weight="normal" fill="#2a2a2a" textLength="20.30" lengthAdjust="spacingAndGlyphs" >412.5</text>
<text x="229.50" y="267.50" font-size="11.4" font-family="'Liberation Serif', serif" font-weight="bold" fill="#3a3ad0" textLength="9.10" lengthAdjust="spacingAndGlyphs" >20</text>
<text x="224.30" y="285.20" font-size="11.4" font-family="'Liberation Serif', serif" font-weight="bold" fill="#3a3ad0" textLength="14.30" lengthAdjust="spacingAndGlyphs" >415</text>
<text x="229.50" y="303.20" font-size="11.4" font-family="'Liberation Serif', serif" font-weight="bold" fill="#3a3ad0" textLength="9.10" lengthAdjust="spacingAndGlyphs" >50</text>
<text x="241.30" y="200.90" font-size="11.4" font-family="'Liberation Serif', serif" font-weight="normal" fill="#2a2a2a" textLength="15.00" lengthAdjust="spacingAndGlyphs" >mm</text>
<text x="241.30" y="217.30" font-size="11.4" font-family="'Liberation Serif', serif" font-weight="normal" fill="#2a2a2a" textLength="15.00" lengthAdjust="spacingAndGlyphs" >mm</text>
<text x="241.30" y="233.50" font-size="11.4" font-family="'Liberation Serif', serif" font-weight="normal" fill="#2a2a2a" textLength="15.00" lengthAdjust="spacingAndGlyphs" >mm</text>
<text x="241.30" y="250.20" font-size="11.4" font-family="'Liberation Serif', serif" font-weight="normal" fill="#2a2a2a" textLength="15.00" lengthAdjust="spacingAndGlyphs" >mm</text>
<text x="241.20" y="267.50" font-size="11.4" font-family="'Liberation Serif', serif" font-weight="normal" fill="#2a2a2a" textLength="25.30" lengthAdjust="spacingAndGlyphs" >N/mm</text>
<text x="267.50" y="262.00" font-size="6.2" font-family="'Liberation Serif', serif" font-weight="normal" fill="#2a2a2a" textLength="3.00" lengthAdjust="spacingAndGlyphs" >2</text>
<text x="241.20" y="285.20" font-size="11.4" font-family="'Liberation Serif', serif" font-weight="normal" fill="#2a2a2a" textLength="25.30" lengthAdjust="spacingAndGlyphs" >N/mm</text>
<text x="267.50" y="279.70" font-size="6.2" font-family="'Liberation Serif', serif" font-weight="normal" fill="#2a2a2a" textLength="3.00" lengthAdjust="spacingAndGlyphs" >2</text>
<text x="241.20" y="303.20" font-size="11.4" font-family="'Liberation Serif', serif" font-weight="normal" fill="#2a2a2a" textLength="18.20" lengthAdjust="spacingAndGlyphs" >kNm</text>
<rect x="296.70" y="290.50" width="73.90" height="16.70" fill="none" stroke="#8a8a8a" stroke-width="0.9" stroke-dasharray="1.5 0.8"/>
<text x="308.40" y="303.00" font-size="11.4" font-family="'Liberation Serif', serif" font-weight="normal" fill="#2a2a2a" textLength="51.30" lengthAdjust="spacingAndGlyphs" >[ From Staad]</text>
<text x="194.30" y="319.60" font-size="11.4" font-family="'Liberation Serif', serif" font-weight="normal" fill="#2a2a2a" textLength="108.10" lengthAdjust="spacingAndGlyphs" >50x10^6/(230x412.5x412.5)</text>
<text x="217.50" y="335.60" font-size="11.4" font-family="'Liberation Serif', serif" font-weight="normal" fill="#2a2a2a" textLength="21.25" lengthAdjust="spacingAndGlyphs" >1.278</text>
<text x="194.00" y="351.25" font-size="11.4" font-family="'Liberation Serif', serif" font-weight="bold" fill="#3a3ad0" textLength="131.30" lengthAdjust="spacingAndGlyphs" >design as singly reinforced beam</text>
<text x="217.50" y="366.30" font-size="11.4" font-family="'Liberation Serif', serif" font-weight="normal" fill="#2a2a2a" textLength="21.25" lengthAdjust="spacingAndGlyphs" >0.385</text>
<text x="194.00" y="381.60" font-size="11.4" font-family="'Liberation Serif', serif" font-weight="normal" fill="#2a2a2a" textLength="39.00" lengthAdjust="spacingAndGlyphs" >pt bd/100</text>
<text x="194.00" y="396.60" font-size="11.4" font-family="'Liberation Serif', serif" font-weight="normal" fill="#2a2a2a" textLength="89.00" lengthAdjust="spacingAndGlyphs" >(0.385x412.5x230)/100</text>
<text x="98.20" y="415.80" font-size="11.4" font-family="'Liberation Serif', serif" font-weight="normal" fill="#2a2a2a" textLength="50.20" lengthAdjust="spacingAndGlyphs" >Required Ast</text>
<text x="224.00" y="415.80" font-size="11.4" font-family="'Liberation Serif', serif" font-weight="normal" fill="#2a2a2a" textLength="14.00" lengthAdjust="spacingAndGlyphs" >365</text>
<text x="241.00" y="415.80" font-size="11.4" font-family="'Liberation Serif', serif" font-weight="normal" fill="#2a2a2a" textLength="12.50" lengthAdjust="spacingAndGlyphs" >mm</text>
<text x="255.00" y="410.30" font-size="6.2" font-family="'Liberation Serif', serif" font-weight="normal" fill="#2a2a2a" textLength="3.20" lengthAdjust="spacingAndGlyphs" >2</text>
<text x="63.00" y="432.80" font-size="11.4" font-family="'Liberation Serif', serif" font-weight="normal" fill="#2a2a2a" textLength="33.90" lengthAdjust="spacingAndGlyphs" >Provided</text>
<text x="122.40" y="432.80" font-size="11.4" font-family="'Liberation Serif', serif" font-weight="bold" fill="#3a3ad0" textLength="5.20" lengthAdjust="spacingAndGlyphs" >2</text>
<text x="151.00" y="432.80" font-size="11.4" font-family="'Liberation Serif', serif" font-weight="normal" fill="#2a2a2a" textLength="22.70" lengthAdjust="spacingAndGlyphs" >nos of</text>
<text x="212.00" y="432.80" font-size="11.4" font-family="'Liberation Serif', serif" font-weight="bold" fill="#3a3ad0" textLength="9.40" lengthAdjust="spacingAndGlyphs" >12</text>
<text x="241.00" y="432.80" font-size="11.4" font-family="'Liberation Serif', serif" font-weight="normal" fill="#2a2a2a" textLength="15.00" lengthAdjust="spacingAndGlyphs" >mm</text>
<text x="281.60" y="432.80" font-size="11.4" font-family="'Liberation Serif', serif" font-weight="normal" fill="#2a2a2a" textLength="14.00" lengthAdjust="spacingAndGlyphs" >226</text>
<text x="298.00" y="432.80" font-size="11.4" font-family="'Liberation Serif', serif" font-weight="normal" fill="#2a2a2a" textLength="14.00" lengthAdjust="spacingAndGlyphs" >mm</text>
<text x="313.00" y="427.30" font-size="6.2" font-family="'Liberation Serif', serif" font-weight="normal" fill="#2a2a2a" textLength="3.20" lengthAdjust="spacingAndGlyphs" >2</text>
<text x="331.60" y="432.80" font-size="11.4" font-family="'Liberation Serif', serif" font-weight="normal" fill="#2a2a2a" textLength="44.80" lengthAdjust="spacingAndGlyphs" >(At bottom)</text>
<text x="63.00" y="450.20" font-size="11.4" font-family="'Liberation Serif', serif" font-weight="normal" fill="#2a2a2a" textLength="33.90" lengthAdjust="spacingAndGlyphs" >Provided</text>
<text x="122.40" y="450.20" font-size="11.4" font-family="'Liberation Serif', serif" font-weight="bold" fill="#3a3ad0" textLength="5.20" lengthAdjust="spacingAndGlyphs" >2</text>
<text x="151.00" y="450.20" font-size="11.4" font-family="'Liberation Serif', serif" font-weight="normal" fill="#2a2a2a" textLength="22.70" lengthAdjust="spacingAndGlyphs" >nos of</text>
<text x="212.00" y="450.20" font-size="11.4" font-family="'Liberation Serif', serif" font-weight="bold" fill="#3a3ad0" textLength="9.40" lengthAdjust="spacingAndGlyphs" >12</text>
<text x="241.00" y="450.20" font-size="11.4" font-family="'Liberation Serif', serif" font-weight="normal" fill="#2a2a2a" textLength="15.00" lengthAdjust="spacingAndGlyphs" >mm</text>
<text x="281.60" y="450.20" font-size="11.4" font-family="'Liberation Serif', serif" font-weight="normal" fill="#2a2a2a" textLength="14.00" lengthAdjust="spacingAndGlyphs" >226</text>
<text x="298.00" y="450.20" font-size="11.4" font-family="'Liberation Serif', serif" font-weight="normal" fill="#2a2a2a" textLength="14.00" lengthAdjust="spacingAndGlyphs" >mm</text>
<text x="313.00" y="444.70" font-size="6.2" font-family="'Liberation Serif', serif" font-weight="normal" fill="#2a2a2a" textLength="3.20" lengthAdjust="spacingAndGlyphs" >2</text>
<text x="331.60" y="450.20" font-size="11.4" font-family="'Liberation Serif', serif" font-weight="normal" fill="#2a2a2a" textLength="44.80" lengthAdjust="spacingAndGlyphs" >(At bottom)</text>
<text x="194.50" y="468.50" font-size="11.4" font-family="'Liberation Serif', serif" font-weight="bold" fill="#3a3ad0" textLength="45.50" lengthAdjust="spacingAndGlyphs" >Hence Safe</text>
<text x="282.00" y="468.50" font-size="11.4" font-family="'Liberation Serif', serif" font-weight="normal" fill="#2a2a2a" textLength="13.60" lengthAdjust="spacingAndGlyphs" >452</text>
<text x="298.00" y="468.50" font-size="11.4" font-family="'Liberation Serif', serif" font-weight="normal" fill="#2a2a2a" textLength="14.00" lengthAdjust="spacingAndGlyphs" >mm</text>
<text x="313.00" y="463.00" font-size="6.2" font-family="'Liberation Serif', serif" font-weight="normal" fill="#2a2a2a" textLength="3.20" lengthAdjust="spacingAndGlyphs" >2</text>
<text x="361.50" y="468.50" font-size="11.4" font-family="'Liberation Serif', serif" font-weight="normal" fill="#2a2a2a" textLength="20.00" lengthAdjust="spacingAndGlyphs" >Refer</text>
<rect x="330.30" y="339.40" width="81.70" height="32.20" fill="none" stroke="#909090" stroke-width="0.9" stroke-dasharray="2 0.6"/>
<line x1="330.30" y1="356.00" x2="412.00" y2="356.00" stroke="#909090" stroke-width="0.9" stroke-dasharray="2 0.6"/>
<text x="362.00" y="351.20" font-size="11.4" font-family="'Liberation Serif', serif" font-weight="normal" fill="#2a2a2a" textLength="19.60" lengthAdjust="spacingAndGlyphs" >Refer</text>
<text x="340.00" y="366.20" font-size="11.4" font-family="'Liberation Serif', serif" font-weight="normal" fill="#2a2a2a" textLength="63.40" lengthAdjust="spacingAndGlyphs" >SP 16 Table - 2 -4</text>
<rect x="330.30" y="455.40" width="81.70" height="24.60" fill="none" stroke="#909090" stroke-width="0.9" stroke-dasharray="2 0.6"/>
<rect x="15.80" y="134.30" width="397.30" height="21.70" fill="none" stroke="#3f8a5c" stroke-width="1.8"/>
<rect x="411.80" y="155.00" width="3.00" height="3.00" fill="#217346" />
<line x1="16.60" y1="156.50" x2="16.60" y2="465.30" stroke="#6f6fe0" stroke-width="1.4" />
<line x1="413.30" y1="157.00" x2="413.30" y2="465.30" stroke="#1f1fc0" stroke-width="2.2" />
<defs><filter id="sh" x="-5%" y="-20%" width="110%" height="140%"><feGaussianBlur stdDeviation="0.9"/></filter></defs>
<rect x="414.40" y="133.80" width="353.60" height="331.50" fill="#a4a4a4" />
<rect x="422.70" y="148.30" width="333.50" height="276.40" fill="#000000" />
<ellipse cx="526.3" cy="167.1" rx="8.9" ry="6.9" fill="none" stroke="#e0e0e0" stroke-width="0.9"/>
<text x="520.50" y="170.60" font-size="9.5" font-family="'Liberation Serif', serif" font-weight="normal" fill="#f0f0f0" textLength="11.60" lengthAdjust="spacingAndGlyphs" >02</text>
<ellipse cx="692.6" cy="167.4" rx="9.4" ry="7.6" fill="none" stroke="#e0e0e0" stroke-width="0.9"/>
<text x="686.60" y="170.90" font-size="9.5" font-family="'Liberation Serif', serif" font-weight="normal" fill="#f0f0f0" textLength="12.00" lengthAdjust="spacingAndGlyphs" >03</text>
<line x1="528.00" y1="175.60" x2="690.40" y2="175.60" stroke="#d8d8d8" stroke-width="1.05" />
<text x="629.00" y="174.80" font-size="9.5" font-family="'Liberation Serif', serif" font-weight="normal" fill="#e8e8e8" textLength="16.30" lengthAdjust="spacingAndGlyphs" >8'-9"</text>
<line x1="526.30" y1="174.00" x2="526.30" y2="204.40" stroke="#d8d8d8" stroke-width="1.05" />
<line x1="693.00" y1="175.00" x2="693.00" y2="204.70" stroke="#d8d8d8" stroke-width="1.05" />
<line x1="553.40" y1="158.00" x2="553.40" y2="183.40" stroke="#2a4aa8" stroke-width="1.0" />
<line x1="566.70" y1="158.00" x2="566.70" y2="167.00" stroke="#2a4aa8" stroke-width="1.0" />
<line x1="553.40" y1="159.90" x2="566.70" y2="159.90" stroke="#2a4aa8" stroke-width="0.9" />
<line x1="555.80" y1="163.20" x2="564.00" y2="163.20" stroke="#2a4aa8" stroke-width="1.3" />
<text x="554.30" y="173.70" font-size="10" font-family="'Liberation Serif', serif" font-weight="normal" fill="#2a4aa8" textLength="16.10" lengthAdjust="spacingAndGlyphs" >30A</text>
<line x1="606.00" y1="158.00" x2="606.00" y2="183.40" stroke="#2a4aa8" stroke-width="1.0" />
<line x1="619.30" y1="158.00" x2="619.30" y2="167.00" stroke="#2a4aa8" stroke-width="1.0" />
<line x1="606.00" y1="159.90" x2="619.30" y2="159.90" stroke="#2a4aa8" stroke-width="0.9" />
<line x1="608.40" y1="163.20" x2="616.60" y2="163.20" stroke="#2a4aa8" stroke-width="1.3" />
<text x="606.90" y="173.70" font-size="10" font-family="'Liberation Serif', serif" font-weight="normal" fill="#2a4aa8" textLength="16.10" lengthAdjust="spacingAndGlyphs" >30B</text>
<line x1="656.20" y1="158.00" x2="656.20" y2="183.40" stroke="#2a4aa8" stroke-width="1.0" />
<line x1="669.50" y1="158.00" x2="669.50" y2="167.00" stroke="#2a4aa8" stroke-width="1.0" />
<line x1="656.20" y1="159.90" x2="669.50" y2="159.90" stroke="#2a4aa8" stroke-width="0.9" />
<line x1="658.60" y1="163.20" x2="666.80" y2="163.20" stroke="#2a4aa8" stroke-width="1.3" />
<text x="657.10" y="173.70" font-size="10" font-family="'Liberation Serif', serif" font-weight="normal" fill="#2a4aa8" textLength="16.10" lengthAdjust="spacingAndGlyphs" >30A</text>
<text x="608.40" y="194.60" font-size="10" font-family="'Liberation Serif', serif" font-weight="normal" fill="#e8e8e8" textLength="68.30" lengthAdjust="spacingAndGlyphs" >2-16 mmØ ST.</text>
<line x1="590.40" y1="190.50" x2="607.50" y2="190.50" stroke="#d8d8d8" stroke-width="1.05" />
<line x1="590.40" y1="190.50" x2="590.40" y2="218.00" stroke="#d8d8d8" stroke-width="1.05" />
<path d="M588.6 213.5 L590.4 218 L592.2 213.5" stroke="#e0e0e0" fill="none" stroke-width="0.8" />
<line x1="505.00" y1="204.30" x2="542.60" y2="204.30" stroke="#d8d8d8" stroke-width="1.05" />
<line x1="508.40" y1="204.30" x2="508.40" y2="217.30" stroke="#d8d8d8" stroke-width="1.05" />
<line x1="539.10" y1="204.30" x2="539.10" y2="217.30" stroke="#d8d8d8" stroke-width="1.05" />
<path d="M517 206.5 L520 201.5 L521 206 L523 201" stroke="#e0e0e0" fill="none" stroke-width="0.8" />
<line x1="504.60" y1="274.40" x2="542.60" y2="274.40" stroke="#d8d8d8" stroke-width="1.05" />
<line x1="508.40" y1="245.40" x2="508.40" y2="274.40" stroke="#d8d8d8" stroke-width="1.05" />
<line x1="539.10" y1="245.40" x2="539.10" y2="274.40" stroke="#d8d8d8" stroke-width="1.05" />
<path d="M519 277 L522 272 L523 276.5 L525 271.5" stroke="#e0e0e0" fill="none" stroke-width="0.8" />
<line x1="449.20" y1="218.00" x2="508.40" y2="218.00" stroke="#d8d8d8" stroke-width="1.05" />
<line x1="539.10" y1="218.00" x2="683.60" y2="218.00" stroke="#d8d8d8" stroke-width="1.05" />
<line x1="449.20" y1="245.50" x2="508.40" y2="245.50" stroke="#d8d8d8" stroke-width="1.05" />
<line x1="539.10" y1="245.50" x2="683.60" y2="245.50" stroke="#d8d8d8" stroke-width="1.05" />
<line x1="449.20" y1="218.00" x2="449.20" y2="268.00" stroke="#d8d8d8" stroke-width="1.05" />
<line x1="455.40" y1="221.30" x2="703.00" y2="221.30" stroke="#d81428" stroke-width="1.1" />
<line x1="455.40" y1="242.70" x2="703.00" y2="242.70" stroke="#d81428" stroke-width="1.1" />
<line x1="455.70" y1="221.30" x2="455.70" y2="228.00" stroke="#d81428" stroke-width="0.9" />
<line x1="455.70" y1="238.50" x2="455.70" y2="242.70" stroke="#d81428" stroke-width="0.9" />
<line x1="472.50" y1="221.30" x2="472.50" y2="242.70" stroke="#d81428" stroke-width="0.9" />
<line x1="479.30" y1="221.30" x2="479.30" y2="242.70" stroke="#d81428" stroke-width="0.9" />
<line x1="485.30" y1="221.30" x2="485.30" y2="242.70" stroke="#d81428" stroke-width="0.9" />
<line x1="491.30" y1="221.30" x2="491.30" y2="242.70" stroke="#d81428" stroke-width="0.9" />
<line x1="550.50" y1="221.30" x2="550.50" y2="242.70" stroke="#d81428" stroke-width="0.9" />
<line x1="557.00" y1="221.30" x2="557.00" y2="242.70" stroke="#d81428" stroke-width="0.9" />
<line x1="563.00" y1="221.30" x2="563.00" y2="242.70" stroke="#d81428" stroke-width="0.9" />
<line x1="569.50" y1="221.30" x2="569.50" y2="242.70" stroke="#d81428" stroke-width="0.9" />
<line x1="597.50" y1="221.30" x2="597.50" y2="242.70" stroke="#d81428" stroke-width="0.9" />
<line x1="610.00" y1="221.30" x2="610.00" y2="242.70" stroke="#d81428" stroke-width="0.9" />
<line x1="623.00" y1="221.30" x2="623.00" y2="242.70" stroke="#d81428" stroke-width="0.9" />
<line x1="655.00" y1="221.30" x2="655.00" y2="242.70" stroke="#d81428" stroke-width="0.9" />
<line x1="662.00" y1="221.30" x2="662.00" y2="242.70" stroke="#d81428" stroke-width="0.9" />
<line x1="667.70" y1="221.30" x2="667.70" y2="242.70" stroke="#d81428" stroke-width="0.9" />
<line x1="674.20" y1="221.30" x2="674.20" y2="242.70" stroke="#d81428" stroke-width="0.9" />
<circle cx="466" cy="233.8" r="2.6" fill="#000" stroke="#e8e8e8" stroke-width="0.9"/>
<line x1="466.00" y1="211.00" x2="466.00" y2="231.20" stroke="#d8d8d8" stroke-width="1.05" />
<line x1="466.00" y1="236.40" x2="466.00" y2="256.40" stroke="#d8d8d8" stroke-width="1.05" />
<line x1="440.00" y1="233.80" x2="463.40" y2="233.80" stroke="#d8d8d8" stroke-width="1.05" />
<line x1="468.60" y1="233.80" x2="492.00" y2="233.80" stroke="#d8d8d8" stroke-width="1.05" />
<rect x="683.60" y="217.70" width="19.60" height="28.20" fill="none" stroke="#72288a" stroke-width="0.9"/>
<line x1="685.30" y1="217.70" x2="685.30" y2="245.90" stroke="#72288a" stroke-width="0.8" />
<line x1="699.80" y1="217.70" x2="699.80" y2="245.90" stroke="#72288a" stroke-width="0.8" />
<line x1="683.60" y1="221.00" x2="703.20" y2="221.00" stroke="#72288a" stroke-width="0.8" />
<line x1="683.60" y1="242.50" x2="703.20" y2="242.50" stroke="#72288a" stroke-width="0.8" />
<rect x="690.40" y="227.20" width="3.40" height="11.60" fill="#c8c8c8" />
<line x1="690.40" y1="229.50" x2="693.80" y2="229.50" stroke="#707070" stroke-width="0.6" />
<line x1="690.40" y1="232.50" x2="693.80" y2="232.50" stroke="#707070" stroke-width="0.6" />
<line x1="690.40" y1="235.50" x2="693.80" y2="235.50" stroke="#707070" stroke-width="0.6" />
<line x1="540.00" y1="212.40" x2="575.90" y2="212.40" stroke="#e0e0e0" stroke-width="0.8" />
<line x1="541.00" y1="209.50" x2="541.00" y2="215.00" stroke="#e0e0e0" stroke-width="0.8" />
<line x1="574.90" y1="209.50" x2="574.90" y2="215.00" stroke="#e0e0e0" stroke-width="0.8" />
<text x="546.80" y="211.30" font-size="9.2" font-family="'Liberation Serif', serif" font-weight="normal" fill="#ececec" textLength="21.40" lengthAdjust="spacingAndGlyphs" >1'-11"</text>
<line x1="647.70" y1="212.40" x2="682.70" y2="212.40" stroke="#e0e0e0" stroke-width="0.8" />
<line x1="648.70" y1="209.50" x2="648.70" y2="215.00" stroke="#e0e0e0" stroke-width="0.8" />
<line x1="681.70" y1="209.50" x2="681.70" y2="215.00" stroke="#e0e0e0" stroke-width="0.8" />
<text x="653.70" y="211.30" font-size="9.2" font-family="'Liberation Serif', serif" font-weight="normal" fill="#ececec" textLength="22.30" lengthAdjust="spacingAndGlyphs" >1'-11"</text>
<line x1="448.50" y1="253.80" x2="506.70" y2="253.80" stroke="#e0e0e0" stroke-width="0.8" />
<text x="475.80" y="252.30" font-size="9.2" font-family="'Liberation Serif', serif" font-weight="normal" fill="#ececec" textLength="4.20" lengthAdjust="spacingAndGlyphs" >a</text>
<line x1="540.00" y1="254.00" x2="682.70" y2="254.00" stroke="#e0e0e0" stroke-width="0.8" />
<text x="559.80" y="252.50" font-size="9.2" font-family="'Liberation Serif', serif" font-weight="normal" fill="#ececec" textLength="4.20" lengthAdjust="spacingAndGlyphs" >a</text>
<text x="608.30" y="252.50" font-size="9.2" font-family="'Liberation Serif', serif" font-weight="normal" fill="#ececec" textLength="4.20" lengthAdjust="spacingAndGlyphs" >b</text>
<text x="662.00" y="252.50" font-size="9.2" font-family="'Liberation Serif', serif" font-weight="normal" fill="#ececec" textLength="4.20" lengthAdjust="spacingAndGlyphs" >a</text>
<line x1="448.50" y1="265.00" x2="702.40" y2="265.00" stroke="#e0e0e0" stroke-width="0.8" />
<text x="469.00" y="263.30" font-size="9.2" font-family="'Liberation Serif', serif" font-weight="normal" fill="#ececec" textLength="18.00" lengthAdjust="spacingAndGlyphs" >3'-1"</text>
<text x="513.50" y="263.30" font-size="9.2" font-family="'Liberation Serif', serif" font-weight="normal" fill="#ececec" textLength="18.80" lengthAdjust="spacingAndGlyphs" >1'-8"</text>
<text x="597.50" y="263.30" font-size="9.2" font-family="'Liberation Serif', serif" font-weight="normal" fill="#ececec" textLength="18.00" lengthAdjust="spacingAndGlyphs" >7'-7"</text>
<text x="690.00" y="263.30" font-size="9.2" font-family="'Liberation Serif', serif" font-weight="normal" fill="#ececec" textLength="4.50" lengthAdjust="spacingAndGlyphs" >1'</text>
<line x1="540.00" y1="250.00" x2="540.00" y2="268.00" stroke="#d0d0d0" stroke-width="0.7" />
<line x1="581.00" y1="250.00" x2="581.00" y2="268.00" stroke="#d0d0d0" stroke-width="0.7" />
<line x1="682.70" y1="250.00" x2="682.70" y2="268.00" stroke="#d0d0d0" stroke-width="0.7" />
<line x1="702.40" y1="250.00" x2="702.40" y2="268.00" stroke="#d0d0d0" stroke-width="0.7" />
<rect x="451.00" y="264.00" width="2.00" height="2.00" fill="#e8e8e8" />
<rect x="502.00" y="264.00" width="2.00" height="2.00" fill="#e8e8e8" />
<rect x="511.00" y="264.00" width="2.00" height="2.00" fill="#e8e8e8" />
<rect x="534.00" y="264.00" width="2.00" height="2.00" fill="#e8e8e8" />
<rect x="543.00" y="264.00" width="2.00" height="2.00" fill="#e8e8e8" />
<rect x="577.00" y="264.00" width="2.00" height="2.00" fill="#e8e8e8" />
<rect x="584.00" y="264.00" width="2.00" height="2.00" fill="#e8e8e8" />
<rect x="678.00" y="264.00" width="2.00" height="2.00" fill="#e8e8e8" />
<rect x="685.00" y="264.00" width="2.00" height="2.00" fill="#e8e8e8" />
<rect x="698.00" y="264.00" width="2.00" height="2.00" fill="#e8e8e8" />
<rect x="451.00" y="252.80" width="2.00" height="2.00" fill="#e8e8e8" />
<rect x="502.00" y="252.80" width="2.00" height="2.00" fill="#e8e8e8" />
<rect x="543.00" y="252.80" width="2.00" height="2.00" fill="#e8e8e8" />
<rect x="577.00" y="252.80" width="2.00" height="2.00" fill="#e8e8e8" />
<rect x="584.00" y="252.80" width="2.00" height="2.00" fill="#e8e8e8" />
<rect x="678.00" y="252.80" width="2.00" height="2.00" fill="#e8e8e8" />
<line x1="582.10" y1="245.00" x2="582.10" y2="271.00" stroke="#d8d8d8" stroke-width="1.05" />
<line x1="582.10" y1="271.00" x2="598.40" y2="271.00" stroke="#d8d8d8" stroke-width="1.05" />
<path d="M580.4 249.5 L582.1 244 L583.8 249.5" stroke="#e0e0e0" fill="none" stroke-width="0.8" />
<text x="600.00" y="275.60" font-size="10" font-family="'Liberation Serif', serif" font-weight="normal" fill="#e8e8e8" textLength="67.40" lengthAdjust="spacingAndGlyphs" >2-16 mmØ ST.</text>
<text x="508.30" y="291.30" font-size="10.2" font-family="'Liberation Sans', sans-serif" font-weight="bold" fill="#f0f0f0" textLength="132.20" lengthAdjust="spacingAndGlyphs" >LONG SECTION OF BEAM FB-30</text>
<line x1="508.30" y1="293.60" x2="639.40" y2="293.60" stroke="#e0e0e0" stroke-width="0.9" />
<text x="508.30" y="301.30" font-size="6.5" font-family="'Liberation Sans', sans-serif" font-weight="bold" fill="#e0e0e0" textLength="44.50" lengthAdjust="spacingAndGlyphs" >SIZE:12"X18"</text>
<line x1="443.50" y1="331.70" x2="507.70" y2="331.70" stroke="#c8a0a0" stroke-width="0.8" />
<line x1="443.50" y1="343.60" x2="456.20" y2="343.60" stroke="#c8a0a0" stroke-width="0.8" />
<line x1="494.30" y1="343.60" x2="507.70" y2="343.60" stroke="#c8a0a0" stroke-width="0.8" />
<path d="M443.5 327 L443.5 336 L441.5 338 L445.5 340 L443.5 342 L443.5 348" stroke="#c8a0a0" fill="none" stroke-width="0.8" />
<path d="M507.7 327 L507.7 336 L505.7 338 L509.7 340 L507.7 342 L507.7 348" stroke="#c8a0a0" fill="none" stroke-width="0.8" />
<line x1="456.20" y1="343.60" x2="456.20" y2="396.00" stroke="#c8c8c8" stroke-width="0.8" />
<line x1="494.30" y1="343.60" x2="494.30" y2="396.00" stroke="#c8c8c8" stroke-width="0.8" />
<line x1="449.00" y1="380.60" x2="494.30" y2="380.60" stroke="#c8a0a0" stroke-width="0.8" />
<line x1="452.40" y1="331.70" x2="452.40" y2="380.60" stroke="#e0e0e0" stroke-width="0.8" />
<rect x="451.40" y="333.00" width="2.00" height="2.00" fill="#f0f0f0" />
<rect x="451.40" y="377.00" width="2.00" height="2.00" fill="#f0f0f0" />
<text x="0.00" y="0.00" font-size="7.5" font-family="'Liberation Serif', serif" font-weight="bold" fill="#f0f0f0" textLength="11.00" lengthAdjust="spacingAndGlyphs" transform="translate(453.3 362.7) rotate(-90)">18"</text>
<rect x="460.90" y="335.30" width="30.00" height="42.80" fill="none" stroke="#900000" stroke-width="3.6" rx="2.8"/>
<rect x="460.90" y="335.30" width="30.00" height="42.80" fill="none" stroke="#ff2020" stroke-width="2.2" rx="2.8"/>
<rect x="462.40" y="336.80" width="1.80" height="1.80" fill="#f0d0d0" />
<rect x="487.60" y="336.80" width="1.80" height="1.80" fill="#f0d0d0" />
<rect x="462.40" y="374.80" width="1.80" height="1.80" fill="#f0d0d0" />
<rect x="487.60" y="374.80" width="1.80" height="1.80" fill="#f0d0d0" />
<path d="M464.4 335.4 L475.6 322.7 L486 334.7 M475.6 322.7 L514.5 322.7" stroke="#d8d8d8" fill="none" stroke-width="0.8" />
<path d="M464.4 377.6 L476.3 387.7 L487.5 377.6 M476.3 387.7 L513.7 387.7" stroke="#d8d8d8" fill="none" stroke-width="0.8" />
<line x1="490.50" y1="355.60" x2="515.20" y2="355.60" stroke="#d8d8d8" stroke-width="0.8" />
<text x="515.00" y="328.30" font-size="9" font-family="'Liberation Serif', serif" font-weight="bold" fill="#f0f0f0" textLength="55.00" lengthAdjust="spacingAndGlyphs" >2-16 mmØ ST.</text>
<text x="515.60" y="358.80" font-size="8.5" font-family="'Liberation Serif', serif" font-weight="bold" fill="#f0f0f0" textLength="62.10" lengthAdjust="spacingAndGlyphs" >10 mmØ@4" c/c</text>
<text x="514.50" y="393.20" font-size="9" font-family="'Liberation Serif', serif" font-weight="bold" fill="#f0f0f0" textLength="55.50" lengthAdjust="spacingAndGlyphs" >2-16 mmØ ST.</text>
<line x1="456.20" y1="394.40" x2="494.30" y2="394.40" stroke="#e0e0e0" stroke-width="0.8" />
<text x="469.60" y="393.50" font-size="7" font-family="'Liberation Serif', serif" font-weight="normal" fill="#e0e0e0" textLength="11.20" lengthAdjust="spacingAndGlyphs" >12"</text>
<text x="454.00" y="407.20" font-size="8.4" font-family="'Liberation Serif', serif" font-weight="bold" fill="#f4f4f4" textLength="58.20" lengthAdjust="spacingAndGlyphs" >SECTION 30A</text>
<line x1="454.00" y1="408.80" x2="512.20" y2="408.80" stroke="#e0e0e0" stroke-width="0.8" />
<text x="454.00" y="415.60" font-size="6.6" font-family="'Liberation Serif', serif" font-weight="normal" fill="#e0e0e0" textLength="37.30" lengthAdjust="spacingAndGlyphs" >SIZE:12"X18"</text>
<line x1="594.50" y1="331.70" x2="658.70" y2="331.70" stroke="#c8a0a0" stroke-width="0.8" />
<line x1="594.50" y1="343.60" x2="607.20" y2="343.60" stroke="#c8a0a0" stroke-width="0.8" />
<line x1="645.30" y1="343.60" x2="658.70" y2="343.60" stroke="#c8a0a0" stroke-width="0.8" />
<path d="M594.5 327 L594.5 336 L592.5 338 L596.5 340 L594.5 342 L594.5 348" stroke="#c8a0a0" fill="none" stroke-width="0.8" />
<path d="M658.7 327 L658.7 336 L656.7 338 L660.7 340 L658.7 342 L658.7 348" stroke="#c8a0a0" fill="none" stroke-width="0.8" />
<line x1="607.20" y1="343.60" x2="607.20" y2="396.00" stroke="#c8c8c8" stroke-width="0.8" />
<line x1="645.30" y1="343.60" x2="645.30" y2="396.00" stroke="#c8c8c8" stroke-width="0.8" />
<line x1="600.00" y1="380.60" x2="645.30" y2="380.60" stroke="#c8a0a0" stroke-width="0.8" />
<line x1="603.40" y1="331.70" x2="603.40" y2="380.60" stroke="#e0e0e0" stroke-width="0.8" />
<rect x="602.40" y="333.00" width="2.00" height="2.00" fill="#f0f0f0" />
<rect x="602.40" y="377.00" width="2.00" height="2.00" fill="#f0f0f0" />
<text x="0.00" y="0.00" font-size="7.5" font-family="'Liberation Serif', serif" font-weight="bold" fill="#f0f0f0" textLength="11.00" lengthAdjust="spacingAndGlyphs" transform="translate(604.3 362.7) rotate(-90)">18"</text>
<rect x="611.90" y="335.30" width="30.00" height="42.80" fill="none" stroke="#900000" stroke-width="3.6" rx="2.8"/>
<rect x="611.90" y="335.30" width="30.00" height="42.80" fill="none" stroke="#ff2020" stroke-width="2.2" rx="2.8"/>
<rect x="613.40" y="336.80" width="1.80" height="1.80" fill="#f0d0d0" />
<rect x="638.60" y="336.80" width="1.80" height="1.80" fill="#f0d0d0" />
<rect x="613.40" y="374.80" width="1.80" height="1.80" fill="#f0d0d0" />
<rect x="638.60" y="374.80" width="1.80" height="1.80" fill="#f0d0d0" />
<path d="M615.4 335.4 L626.6 322.7 L637 334.7 M626.6 322.7 L665.5 322.7" stroke="#d8d8d8" fill="none" stroke-width="0.8" />
<path d="M615.4 377.6 L627.3 387.7 L638.5 377.6 M627.3 387.7 L664.7 387.7" stroke="#d8d8d8" fill="none" stroke-width="0.8" />
<line x1="641.50" y1="355.60" x2="666.20" y2="355.60" stroke="#d8d8d8" stroke-width="0.8" />
<text x="666.00" y="328.30" font-size="9" font-family="'Liberation Serif', serif" font-weight="bold" fill="#f0f0f0" textLength="55.00" lengthAdjust="spacingAndGlyphs" >2-16 mmØ ST.</text>
<text x="666.60" y="358.80" font-size="8.5" font-family="'Liberation Serif', serif" font-weight="bold" fill="#f0f0f0" textLength="64.70" lengthAdjust="spacingAndGlyphs" >10 mmØ@ 7" c/c</text>
<text x="665.50" y="393.20" font-size="9" font-family="'Liberation Serif', serif" font-weight="bold" fill="#f0f0f0" textLength="55.50" lengthAdjust="spacingAndGlyphs" >2-16 mmØ ST.</text>
<line x1="607.20" y1="394.40" x2="645.30" y2="394.40" stroke="#e0e0e0" stroke-width="0.8" />
<text x="620.60" y="393.50" font-size="7" font-family="'Liberation Serif', serif" font-weight="normal" fill="#e0e0e0" textLength="11.20" lengthAdjust="spacingAndGlyphs" >12"</text>
<text x="605.00" y="407.20" font-size="8.4" font-family="'Liberation Serif', serif" font-weight="bold" fill="#f4f4f4" textLength="58.20" lengthAdjust="spacingAndGlyphs" >SECTION 30B</text>
<line x1="605.00" y1="408.80" x2="663.20" y2="408.80" stroke="#e0e0e0" stroke-width="0.8" />
<text x="605.00" y="415.60" font-size="6.6" font-family="'Liberation Serif', serif" font-weight="normal" fill="#e0e0e0" textLength="37.30" lengthAdjust="spacingAndGlyphs" >SIZE:12"X18"</text>
<text x="0" y="460.5" font-size="43" font-family="'Liberation Serif', serif" font-weight="bold" filter="url(#sh)" fill="#3a2c30" textLength="260" lengthAdjust="spacing" transform="translate(465.5 0) scale(0.8 1)">Draftter.com</text>
<text x="0" y="458.3" font-size="43" font-family="'Liberation Serif', serif" font-weight="bold" fill="#ea6a7c" textLength="260" lengthAdjust="spacing" transform="translate(468 0) scale(0.8 1)">Draftter.com</text>
<rect x="0.00" y="465.30" width="768.00" height="2.70" fill="#e4e4e4" />
<line x1="0.00" y1="465.60" x2="57.80" y2="465.60" stroke="#9a9a9a" stroke-width="0.8" />
<line x1="91.70" y1="465.60" x2="768.00" y2="465.60" stroke="#9a9a9a" stroke-width="0.8" />
<rect x="57.80" y="465.30" width="33.90" height="2.70" fill="#ffffff" />
</svg></body></html>
